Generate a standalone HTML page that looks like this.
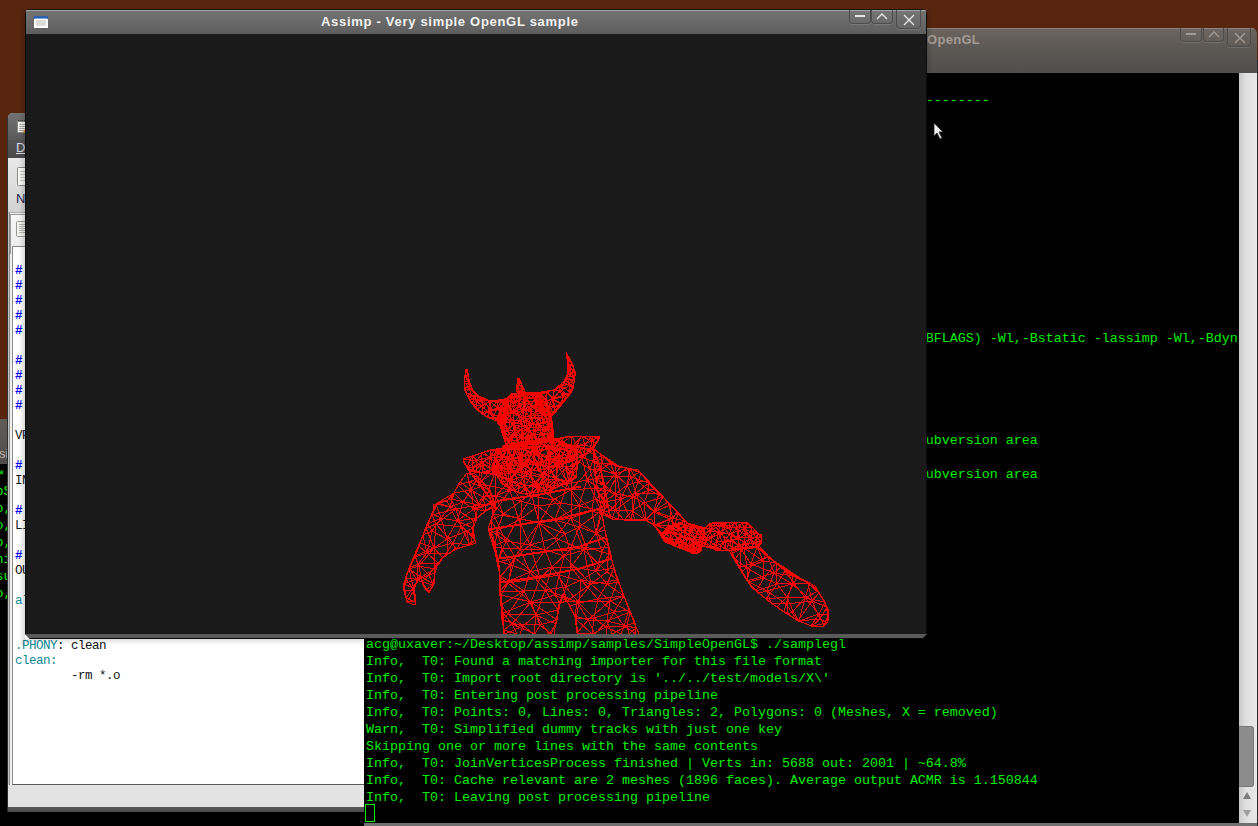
<!DOCTYPE html>
<html><head><meta charset="utf-8">
<style>
*{margin:0;padding:0;box-sizing:border-box}
html,body{width:1258px;height:826px;overflow:hidden;background:#58260f;position:relative;font-family:"Liberation Sans",sans-serif}
.a{position:absolute}
.mono{font-family:"Liberation Mono",monospace;white-space:pre}
/* left terminal */
#lt{left:-400px;top:419px;width:800px;height:407px;background:#000;overflow:hidden}
#lt .tb{left:0;top:0;width:800px;height:45px;background:linear-gradient(#625c58,#4e4d4c)}
/* gedit */
#ge{left:8px;top:113px;width:420px;height:699px;background:#dcdcdc;border-radius:5px 5px 0 0;overflow:hidden}
#gesh{left:7px;top:118px;width:1px;height:694px;background:#2e2e2e}
#ge .tb{left:0;top:0;width:420px;height:27px;background:linear-gradient(#727272,#5a5a5a)}
#ge .mb{left:0;top:27px;width:420px;height:18px;background:linear-gradient(#555,#4a4a4a)}
#ge .tool{left:0;top:45px;width:420px;height:55px;background:linear-gradient(#e8e8e8,#d2d2d2);border-bottom:1px solid #b0b0b0}
#ge .nb{left:0;top:100px;width:420px;height:572px;background:#efefef;border-left:1px solid #c4c4c4}
#ge .nbl{left:1px;top:100px;width:1px;height:572px;background:#8c8c8c}
#ge .tab{left:2px;top:101px;width:418px;height:40px;border:1px solid #9a9a9a;border-bottom:none;background:linear-gradient(#f6f6f6,#ececec)}
#ge .txt{left:4px;top:133px;width:420px;height:539px;background:#fff;border-left:1px solid #8a8a8a;border-top:1px solid #8a8a8a;border-bottom:1px solid #5a5a5a}
#ge .sb{left:0;top:672px;width:420px;height:22px;background:#e3e3e3}
#ge .bb{left:0;top:694px;width:420px;height:5px;background:linear-gradient(#5a5a5a,#4a4a4a)}
.gl{font-size:12.5px;line-height:15px;letter-spacing:-0.5px;color:#111}
.hs{color:#0000ff;font-weight:bold}.tc{color:#0a8a96}
/* right terminal */
#rt{left:364px;top:28px;width:893px;height:798px;background:#000;border-radius:5px 5px 0 0;overflow:hidden}
#rt .tb{left:0;top:0;width:894px;height:45px;background:linear-gradient(#6c645f 0%,#5d5955 40%,#4f4f4f 100%);border-top:1px solid #8a827c}
#rt .sc{left:875px;top:45px;width:18px;height:750px;background:linear-gradient(90deg,#c8c8c8,#e0e0e0 40%,#e8e8e8)}
#rt .bot{left:0;top:795px;width:894px;height:3px;background:#707070}
.tl{font-size:13.33px;line-height:17px;color:#00f000}
/* opengl window */
#gw{left:25px;top:9px;width:902px;height:630px;background:#1a1a1a;border-radius:4px 4px 0 0;overflow:hidden;clip-path:polygon(0.00px 5.00px,0.17px 3.71px,0.67px 2.50px,1.46px 1.46px,2.50px 0.67px,3.71px 0.17px,5.00px 0.00px,calc(100% - 5.00px) 0.00px,calc(100% - 3.71px) 0.17px,calc(100% - 2.50px) 0.67px,calc(100% - 1.46px) 1.46px,calc(100% - 0.67px) 2.50px,calc(100% - 0.17px) 3.71px,calc(100% - 0.00px) 5.00px,100% calc(100% - 5px),calc(100% - 5px) 100%,5px 100%,0 calc(100% - 5px))}
#gwsh{left:19px;top:9px;width:914px;height:636px;background:linear-gradient(90deg,rgba(0,0,0,0),rgba(0,0,0,.14) 6px,rgba(0,0,0,0) 6px,rgba(0,0,0,0) calc(100% - 6px),rgba(0,0,0,.14) calc(100% - 6px),rgba(0,0,0,0));}
#gwsh2{left:25px;top:639px;width:902px;height:6px;background:linear-gradient(rgba(0,0,0,.12),rgba(0,0,0,0))}
#gw .tb{left:0;top:0;width:902px;height:25px;background:linear-gradient(#747474,#5e5e5e);border-top:1px solid #161616;box-shadow:inset 0 1px 0 #a4a4a4}
#gw .bot{left:0;top:625px;width:902px;height:5px;background:#5a5a5a;border-bottom:1px solid #0a0a0a}
.btn{position:absolute;border:1px solid #4c4c4c;border-top:none;border-radius:0 0 4px 4px;background:rgba(255,255,255,.02);box-shadow:0 1px 0 rgba(255,255,255,.13)}
</style></head>
<body>

<!-- left terminal -->
<div id="lt" class="a">
  <div class="tb a"></div>
  <div class="a" style="left:399px;top:27px;font:13px 'Liberation Sans';color:#bdb5ad">si</div>
  <div class="a mono tl" style="left:395.5px;top:47px;">
pS
o,
o,
o,
ni
su
o,</div>
  <div class="a mono tl" style="left:397.5px;top:47.5px">*</div>
</div>

<!-- gedit -->
<div id="gesh" class="a"></div>
<div id="ge" class="a">
  <div class="tb a"></div>
  <svg class="a" style="left:8px;top:6px" width="14" height="15" viewBox="0 0 14 15">
    <rect x="1.5" y="2.5" width="11" height="11" fill="#f4f4f0" stroke="#8a8a8a" stroke-width="1"/>
    <path d="M2 1.5h1M4 1.5h1M6 1.5h1M8 1.5h1M10 1.5h1" stroke="#333"/>
    <path d="M3 5.5h8M3 7.5h8M3 9.5h8M3 11.5h6" stroke="#a8a8a8"/>
    <path d="M8 13 L13 7" stroke="#e08a10" stroke-width="2"/>
  </svg>
  <div class="mb a"></div>
  <div class="a" style="left:8px;top:27px;font:13px 'Liberation Sans';color:#d4dae6;text-decoration:underline">D</div>
  <div class="tool a"></div>
  <svg class="a" style="left:9px;top:54px" width="14" height="19" viewBox="0 0 14 19">
    <rect x="0.5" y="0.5" width="13" height="18" rx="1" fill="#f8f8f6" stroke="#8a8a8a"/>
    <path d="M3 4.5h5M3 7.5h8M3 10.5h8M3 13.5h8" stroke="#c4c4c4"/>
    <rect x="11" y="9" width="3" height="8" fill="#e8741a"/>
  </svg>
  <div class="a" style="left:8px;top:78px;font:13px 'Liberation Sans';color:#23234a">N</div>
  <div class="nb a"></div><div class="nbl a"></div>
  <div class="tab a"></div>
  <svg class="a" style="left:8px;top:108px" width="14" height="16" viewBox="0 0 14 16">
    <rect x="0.5" y="0.5" width="13" height="15" rx="1" fill="#f2f2ef" stroke="#9a9a9a"/>
    <path d="M3 3.5h8M3 5.5h8M3 7.5h8M3 9.5h8M3 11.5h8" stroke="#b4b4b4"/>
  </svg>
  <div class="txt a"></div>
  <div class="a mono gl" style="left:7px;top:151px"><span class="hs">#</span>
<span class="hs">#</span>
<span class="hs">#</span>
<span class="hs">#</span>
<span class="hs">#</span>

<span class="hs">#</span>
<span class="hs">#</span>
<span class="hs">#</span>
<span class="hs">#</span>

VPATH

<span class="hs">#</span>
INCLUDEFLAGS

<span class="hs">#</span>
LIBRARYFLAGS

<span class="hs">#</span>
OUTPUT

<span class="tc">all:</span>


<span class="tc">.PHONY</span>: clean
<span class="tc">clean:</span>
        -rm *.o</div>
  <div class="sb a"></div>
  <div class="bb a"></div>
</div>

<!-- right terminal -->
<div id="rt" class="a">
  <div class="tb a"></div>
  <div class="a" style="left:563px;top:4px;font:bold 13px 'Liberation Sans';letter-spacing:0.3px;color:#a39b94">OpenGL</div>
  <div class="btn" style="left:816px;top:0;width:22px;height:14px"><div class="a" style="left:5px;top:5px;width:10px;height:2px;background:#a39b94"></div></div>
  <div class="btn" style="left:839px;top:0;width:21px;height:14px"><svg class="a" style="left:4px;top:2px" width="12" height="8"><path d="M1 7 L6 2 L11 7" stroke="#a39b94" stroke-width="1.3" fill="none"/></svg></div>
  <div class="btn" style="left:863px;top:0;width:24px;height:19px"><svg class="a" style="left:6px;top:4px" width="12" height="12"><path d="M1 1 L11 11 M11 1 L1 11" stroke="#a39b94" stroke-width="1.3" fill="none"/></svg></div>
  <div class="a mono tl" style="left:2px;top:47px">
------------------------------------------------------------------------------













                                                                  $(LIBFLAGS) -Wl,-Bstatic -lassimp -Wl,-Bdyn





                                                                      ubversion area

                                                                      ubversion area









acg@uxaver:~/Desktop/assimp/samples/SimpleOpenGL$ ./samplegl
Info,  T0: Found a matching importer for this file format
Info,  T0: Import root directory is &#x27;../../test/models/X\&#x27;
Info,  T0: Entering post processing pipeline
Info,  T0: Points: 0, Lines: 0, Triangles: 2, Polygons: 0 (Meshes, X = removed)
Warn,  T0: Simplified dummy tracks with just one key
Skipping one or more lines with the same contents
Info,  T0: JoinVerticesProcess finished | Verts in: 5688 out: 2001 | ~64.8%
Info,  T0: Cache relevant are 2 meshes (1896 faces). Average output ACMR is 1.150844
Info,  T0: Leaving post processing pipeline
</div>
  <div class="a" style="left:1px;top:776px;width:10px;height:18px;border:1px solid #00f000"></div>
  <div class="sc a"></div>
  <div class="a" style="left:875px;top:698px;width:15px;height:61px;background:#8c8c8c;border:1px solid #787878;border-left:none;border-radius:0 3px 3px 0"></div>
  <svg class="a" style="left:878px;top:763px" width="10" height="28"><path d="M5 1 L9 8 L1 8Z" fill="#7c7c7c"/><path d="M1 19 L9 19 L5 26Z" fill="#a0a0a0"/></svg>
  <div class="bot a"></div>
</div>

<div class="a" style="left:1257px;top:60px;width:1px;height:766px;background:#2a2a2a"></div>
<!-- opengl window -->
<div id="gwsh" class="a"></div><div id="gwsh2" class="a"></div>
<div id="gw" class="a">
  <div class="tb a"></div>
  <svg class="a" style="left:9px;top:7px" width="14" height="12" viewBox="0 0 14 12">
    <rect x="0" y="0" width="14" height="12" fill="#fff"/>
    <rect x="0" y="0" width="14" height="3" fill="#2d62b0"/>
    <rect x="1" y="2" width="12" height="1" fill="#7aa6e0"/>
    <rect x="2" y="4" width="10" height="6" fill="#dcdcd8"/>
  </svg>
  <div class="a" style="left:296px;top:5px;font:bold 13px 'Liberation Sans';letter-spacing:0.7px;color:#f2f2f2;white-space:nowrap">Assimp - Very simple OpenGL sample</div>
  <div class="btn" style="left:824px;top:1px;width:22px;height:14px"><div class="a" style="left:5px;top:5px;width:10px;height:2px;background:#e6e6e6"></div></div>
  <div class="btn" style="left:846px;top:1px;width:22px;height:14px"><svg class="a" style="left:4px;top:2px" width="12" height="8"><path d="M1 7 L6 2 L11 7" stroke="#e6e6e6" stroke-width="1.3" fill="none"/></svg></div>
  <div class="btn" style="left:871px;top:1px;width:25px;height:19px"><svg class="a" style="left:6px;top:4px" width="12" height="12"><path d="M1 1 L11 11 M11 1 L1 11" stroke="#e6e6e6" stroke-width="1.3" fill="none"/></svg></div>
  <svg class="a" style="left:0;top:0" width="901" height="629"><path d="M443 366 L440 366 M440 366 L442 360 M442 360 L443 366 M456 404 L462 408 M462 408 L451 400 M451 400 L456 404 M462 408 L456 404 M456 404 L466 401 M466 401 L462 408 M477 392 L483 389 M483 389 L483 392 M483 392 L477 392 M477 392 L472 392 M472 392 L483 389 M483 389 L477 392 M440 366 L444 372 M444 372 L439 373 M439 373 L440 366 M444 372 L440 366 M440 366 L443 366 M443 366 L444 372 M480 411 L478 407 M478 407 L481 405 M481 405 L480 411 M468 409 L462 408 M462 408 L466 401 M466 401 L468 409 M462 408 L468 409 M468 409 L479 415 M479 415 L462 408 M477 392 L472 399 M472 399 L472 392 M472 392 L477 392 M478 407 L472 399 M472 399 L481 405 M481 405 L478 407 M472 399 L468 409 M468 409 L466 401 M466 401 L472 399 M468 409 L472 399 M472 399 L478 407 M478 407 L468 409 M468 409 L474 411 M474 411 L479 415 M479 415 L468 409 M474 411 L468 409 M468 409 L478 407 M478 407 L474 411 M474 411 L480 411 M480 411 L479 415 M479 415 L474 411 M480 411 L474 411 M474 411 L478 407 M478 407 L480 411 M472 399 L480 396 M480 396 L481 405 M481 405 L472 399 M480 396 L472 399 M472 399 L477 392 M477 392 L480 396 M480 396 L477 392 M477 392 L483 392 M483 392 L480 396 M444 372 L444 378 M444 378 L439 373 M439 373 L444 372 M483 398 L480 396 M480 396 L483 392 M483 392 L483 398 M480 396 L483 398 M483 398 L481 405 M481 405 L480 396 M483 398 L480 411 M480 411 L481 405 M481 405 L483 398 M444 390 L448 395 M448 395 L451 400 M451 400 L444 390 M441 384 L444 378 M444 378 L446 386 M446 386 L441 384 M444 390 L441 384 M441 384 L446 386 M446 386 L444 390 M444 378 L439 379 M439 379 L439 373 M439 373 L444 378 M441 384 L439 379 M439 379 L444 378 M444 378 L441 384 M444 378 L449 383 M449 383 L446 386 M446 386 L444 378 M449 383 L444 378 M444 378 L444 372 M444 372 L449 383 M461 395 L456 404 M456 404 L451 400 M451 400 L461 395 M456 404 L461 395 M461 395 L466 401 M466 401 L456 404 M449 383 L453 388 M453 388 L446 386 M446 386 L449 383 M453 388 L449 383 M449 383 L459 391 M459 391 L453 388 M465 392 L461 395 M461 395 L459 391 M459 391 L465 392 M461 395 L465 392 M465 392 L466 401 M466 401 L461 395 M465 392 L472 399 M472 399 L466 401 M466 401 L465 392 M472 399 L465 392 M465 392 L472 392 M472 392 L472 399 M452 391 L453 388 M453 388 L459 391 M459 391 L452 391 M448 395 L452 391 M452 391 L451 400 M451 400 L448 395 M452 391 L448 395 M448 395 L444 390 M444 390 L452 391 M452 391 L461 395 M461 395 L451 400 M451 400 L452 391 M461 395 L452 391 M452 391 L459 391 M459 391 L461 395 M452 391 L444 390 M444 390 L446 386 M446 386 L452 391 M453 388 L452 391 M452 391 L446 386 M446 386 L453 388 M443 367 L440 367 M440 367 L442 360 M442 360 L443 367 M453 400 L447 395 M447 395 L457 397 M457 397 L453 400 M475 408 L481 412 M481 412 L477 414 M477 414 L475 408 M440 367 L444 374 M444 374 L439 375 M439 375 L440 367 M444 374 L440 367 M440 367 L443 367 M443 367 L444 374 M483 397 L479 391 M479 391 L484 390 M484 390 L483 397 M479 391 L483 397 M483 397 L476 399 M476 399 L479 391 M457 390 L465 392 M465 392 L457 397 M457 397 L457 390 M458 405 L453 400 M453 400 L457 397 M457 397 L458 405 M475 408 L481 404 M481 404 L481 412 M481 412 L475 408 M481 404 L475 408 M475 408 L476 399 M476 399 L481 404 M481 404 L483 397 M483 397 L481 412 M481 412 L481 404 M483 397 L481 404 M481 404 L476 399 M476 399 L483 397 M464 409 L471 410 M471 410 L477 414 M477 414 L464 409 M471 410 L475 408 M475 408 L477 414 M477 414 L471 410 M452 386 L465 392 M465 392 L457 390 M457 390 L452 386 M463 403 L471 410 M471 410 L464 409 M464 409 L463 403 M458 405 L463 403 M463 403 L464 409 M464 409 L458 405 M475 408 L463 403 M463 403 L476 399 M476 399 L475 408 M471 410 L463 403 M463 403 L475 408 M475 408 L471 410 M465 392 L463 403 M463 403 L457 397 M457 397 L465 392 M463 403 L458 405 M458 405 L457 397 M457 397 L463 403 M473 391 L479 391 M479 391 L476 399 M476 399 L473 391 M479 391 L473 391 M473 391 L484 390 M484 390 L479 391 M449 390 L452 386 M452 386 L457 390 M457 390 L449 390 M447 395 L449 390 M449 390 L457 397 M457 397 L447 395 M449 390 L457 390 M457 390 L457 397 M457 397 L449 390 M463 403 L469 396 M469 396 L476 399 M476 399 L463 403 M469 396 L463 403 M463 403 L465 392 M465 392 L469 396 M469 396 L473 391 M473 391 L476 399 M476 399 L469 396 M473 391 L469 396 M469 396 L465 392 M465 392 L473 391 M444 374 L440 381 M440 381 L439 375 M439 375 L444 374 M443 388 L449 390 M449 390 L447 395 M447 395 L443 388 M449 390 L443 388 M443 388 L452 386 M452 386 L449 390 M443 388 L447 380 M447 380 L452 386 M452 386 L443 388 M447 380 L443 388 M443 388 L440 381 M440 381 L447 380 M447 380 L440 381 M440 381 L444 374 M444 374 L447 380 M441 360 L440 367 M440 367 L439 377 M439 377 L441 384 M441 384 L446 394 M446 394 L453 402 M453 402 L463 408 M463 408 L472 410 M472 410 L480 416 M480 416 L484 388 M484 388 L480 392 M480 392 L463 392 M463 392 L455 390 M455 390 L445 379 M445 379 L444 370 M444 370 L443 364 M443 364 L441 360 M497 376 L494 369 M494 369 L499 380 M499 380 L497 376 M493 376 L492 379 M492 379 L491 383 M491 383 L493 376 M492 379 L493 379 M493 379 L491 383 M491 383 L492 379 M498 381 L494 382 M494 382 L499 380 M499 380 L498 381 M494 382 L493 379 M493 379 L499 380 M499 380 L494 382 M493 379 L494 382 M494 382 L491 383 M491 383 L493 379 M497 376 L495 373 M495 373 L494 369 M494 369 L497 376 M494 376 L492 379 M492 379 L493 376 M493 376 L494 376 M492 379 L494 376 M494 376 L493 379 M493 379 L492 379 M495 373 L494 376 M494 376 L493 376 M493 376 L495 373 M494 376 L495 373 M495 373 L497 376 M497 376 L494 376 M493 379 L494 376 M494 376 L499 380 M499 380 L493 379 M494 376 L497 376 M497 376 L499 380 M499 380 L494 376 M494 371 L493 376 M493 376 L494 369 M494 369 L494 371 M495 373 L494 371 M494 371 L494 369 M494 369 L495 373 M494 371 L495 373 M495 373 L493 376 M493 376 L494 371 M491 382 L493 369 M493 369 L500 382 M500 382 L491 382 M522 383 L510 384 M510 384 L528 381 M528 381 L522 383 M513 392 L510 397 M510 397 L510 390 M510 390 L513 392 M549 374 L542 368 M542 368 L549 367 M549 367 L549 374 M521 401 L513 392 M513 392 L521 392 M521 392 L521 401 M518 404 L521 401 M521 401 L525 406 M525 406 L518 404 M521 401 L529 403 M529 403 L525 406 M525 406 L521 401 M513 392 L521 401 M521 401 L510 397 M510 397 L513 392 M510 397 L521 401 M521 401 L512 402 M512 402 L510 397 M521 401 L518 404 M518 404 L512 402 M512 402 L521 401 M529 403 L540 390 M540 390 L544 386 M544 386 L529 403 M544 356 L543 349 M543 349 L547 355 M547 355 L544 356 M544 356 L544 361 M544 361 L542 368 M542 368 L544 356 M544 361 L544 356 M544 356 L547 355 M547 355 L544 361 M516 385 L522 383 M522 383 L521 392 M521 392 L516 385 M513 392 L516 385 M516 385 L521 392 M521 392 L513 392 M522 383 L516 385 M516 385 L510 384 M510 384 L522 383 M510 384 L516 385 M516 385 L510 390 M510 390 L510 384 M516 385 L513 392 M513 392 L510 390 M510 390 L516 385 M539 374 L534 378 M534 378 L542 368 M542 368 L539 374 M545 376 L548 380 M548 380 L544 386 M544 386 L545 376 M545 376 L549 374 M549 374 L548 380 M548 380 L545 376 M549 374 L545 376 M545 376 L542 368 M542 368 L549 374 M545 376 L539 374 M539 374 L542 368 M542 368 L545 376 M534 378 L535 382 M535 382 L528 381 M528 381 L534 378 M535 382 L545 376 M545 376 L544 386 M544 386 L535 382 M535 382 L534 378 M534 378 L539 374 M539 374 L535 382 M545 376 L535 382 M535 382 L539 374 M539 374 L545 376 M530 398 L521 401 M521 401 L521 392 M521 392 L530 398 M521 401 L530 398 M530 398 L529 403 M529 403 L521 401 M547 355 L544 349 M544 349 L541 343 M541 343 L547 355 M544 349 L543 349 M543 349 L541 343 M541 343 L544 349 M543 349 L544 349 M544 349 L547 355 M547 355 L543 349 M549 360 L544 361 M544 361 L547 355 M547 355 L549 360 M536 394 L540 390 M540 390 L529 403 M529 403 L536 394 M530 398 L536 394 M536 394 L529 403 M529 403 L530 398 M528 390 L530 398 M530 398 L521 392 M521 392 L528 390 M528 390 L522 383 M522 383 L528 381 M528 381 L528 390 M522 383 L528 390 M528 390 L521 392 M521 392 L522 383 M528 390 L536 394 M536 394 L530 398 M530 398 L528 390 M535 382 L528 390 M528 390 L528 381 M528 381 L535 382 M547 365 L549 360 M549 360 L549 367 M549 367 L547 365 M549 360 L547 365 M547 365 L544 361 M544 361 L549 360 M542 368 L547 365 M547 365 L549 367 M549 367 L542 368 M544 361 L547 365 M547 365 L542 368 M542 368 L544 361 M536 394 L538 388 M538 388 L540 390 M540 390 L536 394 M528 390 L538 388 M538 388 L536 394 M536 394 L528 390 M538 388 L528 390 M528 390 L535 382 M535 382 L538 388 M540 390 L538 388 M538 388 L544 386 M544 386 L540 390 M538 388 L535 382 M535 382 L544 386 M544 386 L538 388 M510 392 L510 399 M510 399 L510 384 M510 384 L510 392 M541 371 L543 365 M543 365 L550 370 M550 370 L541 371 M544 375 L548 377 M548 377 L546 384 M546 384 L544 375 M544 375 L541 371 M541 371 L550 370 M550 370 L544 375 M548 377 L544 375 M544 375 L550 370 M550 370 L548 377 M541 390 L546 384 M546 384 L529 405 M529 405 L541 390 M536 395 L541 390 M541 390 L529 405 M529 405 L536 395 M524 397 L523 405 M523 405 L515 403 M515 403 L524 397 M523 405 L524 397 M524 397 L529 405 M529 405 L523 405 M548 356 L544 349 M544 349 L541 343 M541 343 L548 356 M548 356 L549 363 M549 363 L544 357 M544 357 L548 356 M537 377 L544 375 M544 375 L546 384 M546 384 L537 377 M544 375 L537 377 M537 377 L541 371 M541 371 L544 375 M524 397 L529 398 M529 398 L529 405 M529 405 L524 397 M542 350 L548 356 M548 356 L544 357 M544 357 L542 350 M542 350 L544 349 M544 349 L548 356 M548 356 L542 350 M544 349 L542 350 M542 350 L541 343 M541 343 L544 349 M543 365 L542 350 M542 350 L544 357 M544 357 L543 365 M543 365 L546 364 M546 364 L550 370 M550 370 L543 365 M546 364 L549 363 M549 363 L550 370 M550 370 L546 364 M546 364 L543 365 M543 365 L544 357 M544 357 L546 364 M549 363 L546 364 M546 364 L544 357 M544 357 L549 363 M541 390 L539 386 M539 386 L546 384 M546 384 L541 390 M539 386 L537 377 M537 377 L546 384 M546 384 L539 386 M539 386 L541 390 M541 390 L536 395 M536 395 L539 386 M516 385 L510 392 M510 392 L510 384 M510 384 L516 385 M523 383 L516 385 M516 385 L510 384 M510 384 L523 383 M527 390 L539 386 M539 386 L536 395 M536 395 L527 390 M529 398 L527 390 M527 390 L536 395 M536 395 L529 398 M527 390 L529 398 M529 398 L524 397 M524 397 L527 390 M539 386 L530 380 M530 380 L537 377 M537 377 L539 386 M527 390 L530 380 M530 380 L539 386 M539 386 L527 390 M530 380 L527 390 M527 390 L523 383 M523 383 L530 380 M537 377 L530 380 M530 380 L541 371 M541 371 L537 377 M517 393 L516 385 M516 385 L523 383 M523 383 L517 393 M527 390 L517 393 M517 393 L523 383 M523 383 L527 390 M517 393 L527 390 M527 390 L524 397 M524 397 L517 393 M516 385 L517 393 M517 393 L510 392 M510 392 L516 385 M510 392 L517 393 M517 393 L510 399 M510 399 L510 392 M517 393 L515 403 M515 403 L510 399 M510 399 L517 393 M517 393 L524 397 M524 397 L515 403 M515 403 L517 393 M541 343 L546 353 M546 353 L550 362 M550 362 L550 367 M550 367 L548 380 M548 380 L542 388 M542 388 L536 395 M536 395 L529 399 M529 399 L529 405 M529 405 L526 407 M526 407 L510 401 M510 401 L510 384 M510 384 L514 385 M514 385 L518 384 M518 384 L531 380 M531 380 L538 377 M538 377 L540 371 M540 371 L544 361 M544 361 L543 350 M543 350 L541 343 M527 418 L527 424 M527 424 L519 420 M519 420 L527 418 M512 434 L498 436 M498 436 L507 434 M507 434 L512 434 M481 435 L486 431 M486 431 L483 438 M483 438 L481 435 M478 409 L473 415 M473 415 L472 409 M472 409 L478 409 M473 415 L478 409 M478 409 L479 414 M479 414 L473 415 M485 411 L496 412 M496 412 L488 416 M488 416 L485 411 M485 411 L478 409 M478 409 L485 404 M485 404 L485 411 M478 409 L485 411 M485 411 L479 414 M479 414 L478 409 M478 409 L480 399 M480 399 L485 404 M485 404 L478 409 M480 399 L478 409 M478 409 L476 400 M476 400 L480 399 M493 398 L492 404 M492 404 L485 404 M485 404 L493 398 M492 404 L485 411 M485 411 L485 404 M485 404 L492 404 M485 411 L492 404 M492 404 L496 412 M496 412 L485 411 M507 386 L507 383 M507 383 L512 385 M512 385 L507 386 M510 390 L507 386 M507 386 L512 385 M512 385 L510 390 M507 383 L507 386 M507 386 L502 383 M502 383 L507 383 M517 387 L510 390 M510 390 L512 385 M512 385 L517 387 M510 406 L512 415 M512 415 L505 415 M505 415 L510 406 M512 415 L510 422 M510 422 L505 415 M505 415 L512 415 M510 422 L512 415 M512 415 L519 420 M519 420 L510 422 M512 431 L512 434 M512 434 L507 434 M507 434 L512 431 M480 429 L486 431 M486 431 L481 435 M481 435 L480 429 M477 416 L473 415 M473 415 L479 414 M479 414 L477 416 M479 420 L477 416 M477 416 L479 414 M479 414 L479 420 M477 416 L479 420 M479 420 L473 415 M473 415 L477 416 M476 400 L474 405 M474 405 L472 409 M472 409 L476 400 M474 405 L478 409 M478 409 L472 409 M472 409 L474 405 M478 409 L474 405 M474 405 L476 400 M476 400 L478 409 M480 391 L476 400 M476 400 L472 409 M472 409 L480 391 M483 392 L480 391 M480 391 L484 388 M484 388 L483 392 M489 394 L493 398 M493 398 L485 404 M485 404 L489 394 M480 399 L489 394 M489 394 L485 404 M485 404 L480 399 M483 392 L489 394 M489 394 L480 399 M480 399 L483 392 M489 394 L494 391 M494 391 L493 398 M493 398 L489 394 M489 394 L483 392 M483 392 L484 388 M484 388 L489 394 M494 391 L500 394 M500 394 L493 398 M493 398 L494 391 M502 401 L492 404 M492 404 L493 398 M493 398 L502 401 M502 401 L500 394 M500 394 L506 396 M506 396 L502 401 M500 394 L502 401 M502 401 L493 398 M493 398 L500 394 M512 415 L518 414 M518 414 L519 420 M519 420 L512 415 M510 398 L516 398 M516 398 L510 406 M510 406 L510 398 M510 398 L502 401 M502 401 L506 396 M506 396 L510 398 M502 401 L510 398 M510 398 L510 406 M510 406 L502 401 M510 390 L510 398 M510 398 L506 396 M506 396 L510 390 M517 387 L516 391 M516 391 L510 390 M510 390 L517 387 M516 391 L510 398 M510 398 L510 390 M510 390 L516 391 M510 398 L516 391 M516 391 L516 398 M516 398 L510 398 M516 398 L517 407 M517 407 L510 406 M510 406 L516 398 M517 407 L512 415 M512 415 L510 406 M510 406 L517 407 M517 407 L518 414 M518 414 L512 415 M512 415 L517 407 M490 425 L484 419 M484 419 L488 416 M488 416 L490 425 M479 420 L484 419 M484 419 L479 425 M479 425 L479 420 M484 419 L479 420 M479 420 L479 414 M479 414 L484 419 M484 419 L485 411 M485 411 L488 416 M488 416 L484 419 M485 411 L484 419 M484 419 L479 414 M479 414 L485 411 M483 426 L490 425 M490 425 L486 431 M486 431 L483 426 M483 426 L480 429 M480 429 L479 425 M479 425 L483 426 M480 429 L483 426 M483 426 L486 431 M486 431 L480 429 M484 419 L483 426 M483 426 L479 425 M479 425 L484 419 M483 426 L484 419 M484 419 L490 425 M490 425 L483 426 M498 436 L503 435 M503 435 L507 434 M507 434 L498 436 M503 435 L501 430 M501 430 L507 434 M507 434 L503 435 M501 430 L503 435 M503 435 L498 436 M498 436 L501 430 M510 422 L504 421 M504 421 L505 415 M505 415 L510 422 M512 431 L506 427 M506 427 L510 422 M510 422 L512 431 M506 427 L504 421 M504 421 L510 422 M510 422 L506 427 M504 421 L506 427 M506 427 L501 430 M501 430 L504 421 M501 430 L506 427 M506 427 L507 434 M507 434 L501 430 M506 427 L512 431 M512 431 L507 434 M507 434 L506 427 M516 425 L510 422 M510 422 L519 420 M519 420 L516 425 M516 425 L512 431 M512 431 L510 422 M510 422 L516 425 M486 431 L488 437 M488 437 L483 438 M483 438 L486 431 M488 437 L493 436 M493 436 L498 436 M498 436 L488 437 M496 428 L504 421 M504 421 L501 430 M501 430 L496 428 M496 428 L501 430 M501 430 L498 436 M498 436 L496 428 M478 395 L480 399 M480 399 L476 400 M476 400 L478 395 M480 391 L478 395 M478 395 L476 400 M476 400 L480 391 M478 395 L483 392 M483 392 L480 399 M480 399 L478 395 M483 392 L478 395 M478 395 L480 391 M480 391 L483 392 M489 394 L490 387 M490 387 L494 391 M494 391 L489 394 M492 384 L490 387 M490 387 L488 385 M488 385 L492 384 M488 385 L490 387 M490 387 L484 388 M484 388 L488 385 M490 387 L489 394 M489 394 L484 388 M484 388 L490 387 M497 386 L490 387 M490 387 L492 384 M492 384 L497 386 M490 387 L497 386 M497 386 L494 391 M494 391 L490 387 M497 384 L492 384 M492 384 L502 383 M502 383 L497 384 M497 386 L497 384 M497 384 L502 383 M502 383 L497 386 M497 384 L497 386 M497 386 L492 384 M492 384 L497 384 M502 389 L510 390 M510 390 L506 396 M506 396 L502 389 M500 394 L502 389 M502 389 L506 396 M506 396 L500 394 M502 389 L507 386 M507 386 L510 390 M510 390 L502 389 M507 386 L502 389 M502 389 L502 383 M502 383 L507 386 M502 389 L497 386 M497 386 L502 383 M502 383 L502 389 M497 386 L502 389 M502 389 L494 391 M494 391 L497 386 M502 389 L500 394 M500 394 L494 391 M494 391 L502 389 M492 404 L500 408 M500 408 L496 412 M496 412 L492 404 M502 401 L500 408 M500 408 L492 404 M492 404 L502 401 M496 412 L500 408 M500 408 L505 415 M505 415 L496 412 M500 408 L510 406 M510 406 L505 415 M505 415 L500 408 M500 408 L502 401 M502 401 L510 406 M510 406 L500 408 M516 398 L522 395 M522 395 L523 400 M523 400 L516 398 M516 391 L522 395 M522 395 L516 398 M516 398 L516 391 M523 400 L522 395 M522 395 L526 404 M526 404 L523 400 M522 406 L516 398 M516 398 L523 400 M523 400 L522 406 M522 406 L517 407 M517 407 L516 398 M516 398 L522 406 M522 406 L523 400 M523 400 L526 404 M526 404 L522 406 M526 409 L522 406 M522 406 L526 404 M526 404 L526 409 M517 407 L522 406 M522 406 L518 414 M518 414 L517 407 M522 406 L526 409 M526 409 L518 414 M518 414 L522 406 M527 424 L526 427 M526 427 L519 420 M519 420 L527 424 M527 432 L526 427 M526 427 L529 428 M529 428 L527 432 M526 427 L527 424 M527 424 L529 428 M529 428 L526 427 M512 431 L517 433 M517 433 L512 434 M512 434 L512 431 M493 436 L492 432 M492 432 L498 436 M498 436 L493 436 M492 432 L496 428 M496 428 L498 436 M498 436 L492 432 M492 432 L488 437 M488 437 L486 431 M486 431 L492 432 M488 437 L492 432 M492 432 L493 436 M493 436 L488 437 M490 425 L492 432 M492 432 L486 431 M486 431 L490 425 M496 428 L492 432 M492 432 L490 425 M490 425 L496 428 M496 428 L496 421 M496 421 L504 421 M504 421 L496 428 M496 421 L496 412 M496 412 L505 415 M505 415 L496 421 M504 421 L496 421 M496 421 L505 415 M505 415 L504 421 M496 421 L496 428 M496 428 L490 425 M490 425 L496 421 M496 412 L496 421 M496 421 L488 416 M488 416 L496 412 M496 421 L490 425 M490 425 L488 416 M488 416 L496 421 M526 409 L524 416 M524 416 L518 414 M518 414 L526 409 M524 416 L527 418 M527 418 L519 420 M519 420 L524 416 M518 414 L524 416 M524 416 L519 420 M519 420 L518 414 M520 390 L516 391 M516 391 L517 387 M517 387 L520 390 M520 390 L522 395 M522 395 L516 391 M516 391 L520 390 M522 395 L520 390 M520 390 L526 404 M526 404 L522 395 M523 433 L526 427 M526 427 L527 432 M527 432 L523 433 M517 433 L523 433 M523 433 L512 434 M512 434 L517 433 M516 425 L520 430 M520 430 L512 431 M512 431 L516 425 M520 430 L517 433 M517 433 L512 431 M512 431 L520 430 M520 430 L523 433 M523 433 L517 433 M517 433 L520 430 M523 433 L520 430 M520 430 L526 427 M526 427 L523 433 M520 430 L516 425 M516 425 L519 420 M519 420 L520 430 M526 427 L520 430 M520 430 L519 420 M519 420 L526 427 M524 416 L526 414 M526 414 L527 418 M527 418 L524 416 M526 414 L524 416 M524 416 L526 409 M526 409 L526 414 M526 414 L526 409 M526 409 L526 404 M526 404 L526 414 M526 414 L526 404 M526 404 L529 428 M529 428 L526 414 M527 424 L526 414 M526 414 L529 428 M529 428 L527 424 M526 414 L527 424 M527 424 L527 418 M527 418 L526 414 M481 435 L475 416 M475 416 L480 430 M480 430 L481 435 M474 406 L476 408 M476 408 L472 412 M472 412 L474 406 M511 384 L505 384 M505 384 L500 383 M500 383 L511 384 M510 386 L505 384 M505 384 L511 384 M511 384 L510 386 M505 384 L510 386 M510 386 L500 392 M500 392 L505 384 M500 392 L512 393 M512 393 L505 401 M505 401 L500 392 M512 393 L515 398 M515 398 L505 401 M505 401 L512 393 M510 386 L512 393 M512 393 L500 392 M500 392 L510 386 M475 416 L480 424 M480 424 L480 430 M480 430 L475 416 M487 429 L480 424 M480 424 L483 421 M483 421 L487 429 M480 424 L487 429 M487 429 L480 430 M480 430 L480 424 M474 406 L476 401 M476 401 L476 408 M476 408 L474 406 M478 396 L476 401 M476 401 L474 406 M474 406 L478 396 M476 408 L479 413 M479 413 L472 412 M472 412 L476 408 M479 413 L475 416 M475 416 L472 412 M472 412 L479 413 M479 413 L489 413 M489 413 L483 421 M483 421 L479 413 M506 435 L517 433 M517 433 L527 432 M527 432 L506 435 M505 384 L500 386 M500 386 L500 383 M500 383 L505 384 M500 386 L505 384 M505 384 L500 392 M500 392 L500 386 M500 386 L494 384 M494 384 L500 383 M500 383 L500 386 M485 398 L478 396 M478 396 L480 391 M480 391 L485 398 M485 398 L476 401 M476 401 L478 396 M478 396 L485 398 M494 384 L494 388 M494 388 L488 384 M488 384 L494 384 M500 386 L494 388 M494 388 L494 384 M494 384 L500 386 M494 396 L494 388 M494 388 L500 392 M500 392 L494 396 M494 388 L500 386 M500 386 L500 392 M500 392 L494 388 M496 415 L494 408 M494 408 L501 412 M501 412 L496 415 M494 408 L496 415 M496 415 L489 413 M489 413 L494 408 M512 393 L517 390 M517 390 L515 398 M515 398 L512 393 M522 413 L520 405 M520 405 L525 405 M525 405 L522 413 M517 390 L522 396 M522 396 L515 398 M515 398 L517 390 M522 396 L517 390 M517 390 L520 390 M520 390 L522 396 M515 398 L511 404 M511 404 L505 401 M505 401 L515 398 M520 405 L511 404 M511 404 L515 398 M515 398 L520 405 M515 425 L509 426 M509 426 L515 418 M515 418 L515 425 M509 426 L508 415 M508 415 L515 418 M515 418 L509 426 M491 421 L487 429 M487 429 L483 421 M483 421 L491 421 M489 413 L491 421 M491 421 L483 421 M483 421 L489 413 M496 415 L491 421 M491 421 L489 413 M489 413 L496 415 M480 424 L479 419 M479 419 L483 421 M483 421 L480 424 M479 419 L480 424 M480 424 L475 416 M475 416 L479 419 M479 419 L479 413 M479 413 L483 421 M483 421 L479 419 M479 413 L479 419 M479 419 L475 416 M475 416 L479 413 M523 419 L515 425 M515 425 L515 418 M515 418 L523 419 M527 422 L523 419 M523 419 L526 417 M526 417 L527 422 M522 413 L523 419 M523 419 L515 418 M515 418 L522 413 M523 419 L522 413 M522 413 L526 417 M526 417 L523 419 M485 398 L487 389 M487 389 L494 396 M494 396 L485 398 M487 389 L494 388 M494 388 L494 396 M494 396 L487 389 M484 387 L487 389 M487 389 L480 391 M480 391 L484 387 M487 389 L485 398 M485 398 L480 391 M480 391 L487 389 M487 389 L484 387 M484 387 L488 384 M488 384 L487 389 M494 388 L487 389 M487 389 L488 384 M488 384 L494 388 M488 403 L494 408 M494 408 L489 413 M489 413 L488 403 M488 403 L485 398 M485 398 L494 396 M494 396 L488 403 M494 408 L497 402 M497 402 L501 412 M501 412 L494 408 M497 402 L500 392 M500 392 L505 401 M505 401 L497 402 M497 402 L494 396 M494 396 L500 392 M500 392 L497 402 M497 402 L488 403 M488 403 L494 396 M494 396 L497 402 M488 403 L497 402 M497 402 L494 408 M494 408 L488 403 M517 390 L516 387 M516 387 L520 390 M520 390 L517 390 M516 387 L510 386 M510 386 L511 384 M511 384 L516 387 M516 387 L512 393 M512 393 L510 386 M510 386 L516 387 M516 387 L517 390 M517 390 L512 393 M512 393 L516 387 M526 411 L522 413 M522 413 L525 405 M525 405 L526 411 M522 413 L526 411 M526 411 L526 417 M526 417 L522 413 M526 411 L527 422 M527 422 L526 417 M526 417 L526 411 M527 422 L526 411 M526 411 L528 428 M528 428 L527 422 M523 400 L520 405 M520 405 L515 398 M515 398 L523 400 M522 396 L523 400 M523 400 L515 398 M515 398 L522 396 M520 405 L523 400 M523 400 L525 405 M525 405 L520 405 M523 400 L522 396 M522 396 L525 405 M525 405 L523 400 M503 420 L496 415 M496 415 L501 412 M501 412 L503 420 M508 415 L503 420 M503 420 L501 412 M501 412 L508 415 M509 426 L503 420 M503 420 L508 415 M508 415 L509 426 M511 404 L506 408 M506 408 L505 401 M505 401 L511 404 M497 402 L506 408 M506 408 L501 412 M501 412 L497 402 M506 408 L497 402 M497 402 L505 401 M505 401 L506 408 M506 408 L508 415 M508 415 L501 412 M501 412 L506 408 M515 409 L511 404 M511 404 L520 405 M520 405 L515 409 M515 409 L522 413 M522 413 L515 418 M515 418 L515 409 M522 413 L515 409 M515 409 L520 405 M520 405 L522 413 M508 415 L515 409 M515 409 L515 418 M515 418 L508 415 M506 408 L515 409 M515 409 L508 415 M508 415 L506 408 M515 409 L506 408 M506 408 L511 404 M511 404 L515 409 M490 437 L495 436 M495 436 L484 437 M484 437 L490 437 M490 437 L490 434 M490 434 L495 436 M495 436 L490 437 M490 434 L484 434 M484 434 L487 429 M487 429 L490 434 M481 435 L484 434 M484 434 L484 437 M484 437 L481 435 M484 434 L490 437 M490 437 L484 437 M484 437 L484 434 M490 437 L484 434 M484 434 L490 434 M490 434 L490 437 M484 434 L481 435 M481 435 L480 430 M480 430 L484 434 M487 429 L484 434 M484 434 L480 430 M480 430 L487 429 M513 430 L509 426 M509 426 L515 425 M515 425 L513 430 M520 429 L513 430 M513 430 L515 425 M515 425 L520 429 M513 430 L520 429 M520 429 L517 433 M517 433 L513 430 M497 428 L490 434 M490 434 L487 429 M487 429 L497 428 M491 421 L497 428 M497 428 L487 429 M487 429 L491 421 M490 434 L497 428 M497 428 L495 436 M495 436 L490 434 M517 433 L522 432 M522 432 L527 432 M527 432 L517 433 M520 429 L522 432 M522 432 L517 433 M517 433 L520 429 M525 425 L523 419 M523 419 L527 422 M527 422 L525 425 M525 425 L527 422 M527 422 L528 428 M528 428 L525 425 M523 419 L525 425 M525 425 L515 425 M515 425 L523 419 M525 425 L520 429 M520 429 L515 425 M515 425 L525 425 M525 425 L522 432 M522 432 L520 429 M520 429 L525 425 M527 432 L525 425 M525 425 L528 428 M528 428 L527 432 M522 432 L525 425 M525 425 L527 432 M527 432 L522 432 M479 413 L483 405 M483 405 L489 413 M489 413 L479 413 M483 405 L488 403 M488 403 L489 413 M489 413 L483 405 M483 405 L479 413 M479 413 L476 408 M476 408 L483 405 M476 401 L483 405 M483 405 L476 408 M476 408 L476 401 M485 398 L483 405 M483 405 L476 401 M476 401 L485 398 M488 403 L483 405 M483 405 L485 398 M485 398 L488 403 M513 430 L511 433 M511 433 L509 426 M509 426 L513 430 M511 433 L517 433 M517 433 L506 435 M506 435 L511 433 M511 433 L513 430 M513 430 L517 433 M517 433 L511 433 M497 422 L497 428 M497 428 L491 421 M491 421 L497 422 M497 422 L491 421 M491 421 L496 415 M496 415 L497 422 M503 420 L497 422 M497 422 L496 415 M496 415 L503 420 M495 436 L500 435 M500 435 L506 435 M506 435 L495 436 M497 428 L500 435 M500 435 L495 436 M495 436 L497 428 M504 429 L503 420 M503 420 L509 426 M509 426 L504 429 M504 429 L497 422 M497 422 L503 420 M503 420 L504 429 M497 422 L504 429 M504 429 L497 428 M497 428 L497 422 M504 429 L511 433 M511 433 L506 435 M506 435 L504 429 M511 433 L504 429 M504 429 L509 426 M509 426 L511 433 M500 435 L504 429 M504 429 L506 435 M506 435 L500 435 M504 429 L500 435 M500 435 L497 428 M497 428 L504 429 M499 384 L492 384 M492 384 L506 383 M506 383 L499 384 M488 402 L498 409 M498 409 L489 416 M489 416 L488 402 M500 418 L498 409 M498 409 L506 410 M506 410 L500 418 M498 409 L500 418 M500 418 L489 416 M489 416 L498 409 M486 437 L500 435 M500 435 L529 432 M529 432 L486 437 M480 429 L476 416 M476 416 L479 422 M479 422 L480 429 M480 429 L481 436 M481 436 L473 411 M473 411 L480 429 M521 409 L512 419 M512 419 L506 410 M506 410 L521 409 M512 419 L521 409 M521 409 L526 417 M526 417 L512 419 M512 419 L500 418 M500 418 L506 410 M506 410 L512 419 M526 409 L521 409 M521 409 L525 402 M525 402 L526 409 M521 409 L526 409 M526 409 L526 417 M526 417 L521 409 M526 409 L525 402 M525 402 L529 432 M529 432 L526 409 M521 409 L516 403 M516 403 L525 402 M525 402 L521 409 M506 397 L516 403 M516 403 L506 410 M506 410 L506 397 M516 403 L521 409 M521 409 L506 410 M506 410 L516 403 M522 432 L528 424 M528 424 L529 432 M529 432 L522 432 M528 424 L526 409 M526 409 L529 432 M529 432 L528 424 M526 409 L528 424 M528 424 L526 417 M526 417 L526 409 M491 393 L486 386 M486 386 L492 384 M492 384 L491 393 M486 386 L491 393 M491 393 L480 391 M480 391 L486 386 M482 410 L488 402 M488 402 L489 416 M489 416 L482 410 M479 422 L482 410 M482 410 L489 416 M489 416 L479 422 M476 416 L482 410 M482 410 L479 422 M479 422 L476 416 M482 410 L476 416 M476 416 L473 411 M473 411 L482 410 M481 398 L477 398 M477 398 L480 391 M480 391 L481 398 M491 393 L481 398 M481 398 L480 391 M480 391 L491 393 M481 398 L491 393 M491 393 L488 402 M488 402 L481 398 M482 410 L481 398 M481 398 L488 402 M488 402 L482 410 M500 435 L498 429 M498 429 L508 434 M508 434 L500 435 M515 433 L522 432 M522 432 L529 432 M529 432 L515 433 M500 435 L515 433 M515 433 L529 432 M529 432 L500 435 M515 433 L500 435 M500 435 L508 434 M508 434 L515 433 M517 395 L516 403 M516 403 L506 397 M506 397 L517 395 M511 388 L517 395 M517 395 L506 397 M506 397 L511 388 M518 425 L528 424 M528 424 L522 432 M522 432 L518 425 M515 433 L518 425 M518 425 L522 432 M522 432 L515 433 M518 425 L512 419 M512 419 L526 417 M526 417 L518 425 M528 424 L518 425 M518 425 L526 417 M526 417 L528 424 M514 385 L511 388 M511 388 L506 383 M506 383 L514 385 M517 395 L514 385 M514 385 L520 389 M520 389 L517 395 M514 385 L517 395 M517 395 L511 388 M511 388 L514 385 M500 389 L511 388 M511 388 L506 397 M506 397 L500 389 M499 384 L500 389 M500 389 L492 384 M492 384 L499 384 M500 389 L491 393 M491 393 L492 384 M492 384 L500 389 M500 389 L499 384 M499 384 L506 383 M506 383 L500 389 M511 388 L500 389 M500 389 L506 383 M506 383 L511 388 M475 405 L482 410 M482 410 L473 411 M473 411 L475 405 M481 398 L475 405 M475 405 L477 398 M477 398 L481 398 M475 405 L481 398 M481 398 L482 410 M482 410 L475 405 M500 418 L491 425 M491 425 L489 416 M489 416 L500 418 M498 429 L491 425 M491 425 L500 418 M500 418 L498 429 M491 425 L479 422 M479 422 L489 416 M489 416 L491 425 M491 425 L480 429 M480 429 L479 422 M479 422 L491 425 M522 396 L520 389 M520 389 L525 402 M525 402 L522 396 M522 396 L517 395 M517 395 L520 389 M520 389 L522 396 M516 403 L522 396 M522 396 L525 402 M525 402 L516 403 M517 395 L522 396 M522 396 L516 403 M516 403 L517 395 M507 425 L515 433 M515 433 L508 434 M508 434 L507 425 M507 425 L518 425 M518 425 L515 433 M515 433 L507 425 M518 425 L507 425 M507 425 L512 419 M512 419 L518 425 M498 429 L507 425 M507 425 L508 434 M508 434 L498 429 M512 419 L507 425 M507 425 L500 418 M500 418 L512 419 M507 425 L498 429 M498 429 L500 418 M500 418 L507 425 M499 400 L500 389 M500 389 L506 397 M506 397 L499 400 M500 389 L499 400 M499 400 L491 393 M491 393 L500 389 M499 400 L506 397 M506 397 L506 410 M506 410 L499 400 M498 409 L499 400 M499 400 L506 410 M506 410 L498 409 M499 400 L498 409 M498 409 L488 402 M488 402 L499 400 M491 393 L499 400 M499 400 L488 402 M488 402 L491 393 M494 436 L491 425 M491 425 L498 429 M498 429 L494 436 M494 436 L500 435 M500 435 L486 437 M486 437 L494 436 M494 436 L498 429 M498 429 L500 435 M500 435 L494 436 M484 432 L494 436 M494 436 L486 437 M486 437 L484 432 M494 436 L484 432 M484 432 L491 425 M491 425 L494 436 M491 425 L484 432 M484 432 L480 429 M480 429 L491 425 M484 432 L486 437 M486 437 L481 436 M481 436 L484 432 M480 429 L484 432 M484 432 L481 436 M481 436 L480 429 M480 391 L487 385 M487 385 L492 384 M492 384 L510 384 M510 384 L520 389 M520 389 L526 407 M526 407 L526 416 M526 416 L528 425 M528 425 L529 431 M529 431 L481 438 M481 438 L479 425 M479 425 L478 417 M478 417 L473 415 M473 415 L472 410 M472 410 L480 391 M447 447 L442 458 M442 458 L438 450 M438 450 L447 447 M483 439 L520 432 M520 432 L501 436 M501 436 L483 439 M520 432 L483 439 M483 439 L465 441 M465 441 L520 432 M541 454 L544 444 M544 444 L549 451 M549 451 L541 454 M442 458 L447 458 M447 458 L449 463 M449 463 L442 458 M447 447 L447 458 M447 458 L442 458 M442 458 L447 447 M567 432 L571 434 M571 434 L565 441 M565 441 L567 432 M571 434 L567 432 M567 432 L575 427 M575 427 L571 434 M567 432 L565 427 M565 427 L575 427 M575 427 L567 432 M467 465 L469 460 M469 460 L477 465 M477 465 L467 465 M465 448 L456 444 M456 444 L465 441 M465 441 L465 448 M477 448 L483 439 M483 439 L488 450 M488 450 L477 448 M477 448 L469 460 M469 460 L465 448 M465 448 L477 448 M509 442 L497 446 M497 446 L501 436 M501 436 L509 442 M509 442 L520 432 M520 432 L525 439 M525 439 L509 442 M483 439 L492 438 M492 438 L488 450 M488 450 L483 439 M492 438 L497 446 M497 446 L488 450 M488 450 L492 438 M492 438 L483 439 M483 439 L501 436 M501 436 L492 438 M497 446 L492 438 M492 438 L501 436 M501 436 L497 446 M497 458 L486 464 M486 464 L488 450 M488 450 L497 458 M497 446 L497 458 M497 458 L488 450 M488 450 L497 446 M529 431 L520 432 M520 432 L538 429 M538 429 L529 431 M520 432 L529 431 M529 431 L525 439 M525 439 L520 432 M552 437 L557 447 M557 447 L549 451 M549 451 L552 437 M544 444 L552 437 M552 437 L549 451 M549 451 L544 444 M557 447 L552 437 M552 437 L565 441 M565 441 L557 447 M552 437 L567 432 M567 432 L565 441 M565 441 L552 437 M523 459 L532 456 M532 456 L541 454 M541 454 L523 459 M534 447 L544 444 M544 444 L541 454 M541 454 L534 447 M532 456 L534 447 M534 447 L541 454 M541 454 L532 456 M458 463 L467 465 M467 465 L449 463 M449 463 L458 463 M458 463 L469 460 M469 460 L467 465 M467 465 L458 463 M483 439 L474 441 M474 441 L465 441 M465 441 L483 439 M477 448 L474 441 M474 441 L483 439 M483 439 L477 448 M474 441 L465 448 M465 448 L465 441 M465 441 L474 441 M474 441 L477 448 M477 448 L465 448 M465 448 L474 441 M486 464 L480 459 M480 459 L488 450 M488 450 L486 464 M480 459 L477 448 M477 448 L488 450 M488 450 L480 459 M480 459 L486 464 M486 464 L477 465 M477 465 L480 459 M469 460 L480 459 M480 459 L477 465 M477 465 L469 460 M477 448 L480 459 M480 459 L469 460 M469 460 L477 448 M520 432 L511 434 M511 434 L501 436 M501 436 L520 432 M511 434 L509 442 M509 442 L501 436 M501 436 L511 434 M509 442 L511 434 M511 434 L520 432 M520 432 L509 442 M509 442 L510 454 M510 454 L497 446 M497 446 L509 442 M510 454 L497 458 M497 458 L497 446 M497 446 L510 454 M510 454 L523 459 M523 459 L514 461 M514 461 L510 454 M497 458 L495 463 M495 463 L486 464 M486 464 L497 458 M486 464 L495 463 M495 463 L477 465 M477 465 L486 464 M567 432 L556 427 M556 427 L565 427 M565 427 L567 432 M552 437 L556 427 M556 427 L567 432 M567 432 L552 437 M529 431 L537 434 M537 434 L525 439 M525 439 L529 431 M537 434 L534 447 M534 447 L525 439 M525 439 L537 434 M537 434 L529 431 M529 431 L538 429 M538 429 L537 434 M534 447 L537 434 M537 434 L544 444 M544 444 L534 447 M537 434 L552 437 M552 437 L544 444 M544 444 L537 434 M457 454 L447 458 M447 458 L447 447 M447 447 L457 454 M456 444 L457 454 M457 454 L447 447 M447 447 L456 444 M447 458 L457 454 M457 454 L449 463 M449 463 L447 458 M457 454 L458 463 M458 463 L449 463 M449 463 L457 454 M457 454 L456 444 M456 444 L465 448 M465 448 L457 454 M469 460 L457 454 M457 454 L465 448 M465 448 L469 460 M458 463 L457 454 M457 454 L469 460 M469 460 L458 463 M504 462 L510 454 M510 454 L514 461 M514 461 L504 462 M510 454 L504 462 M504 462 L497 458 M497 458 L510 454 M495 463 L504 462 M504 462 L514 461 M514 461 L495 463 M504 462 L495 463 M495 463 L497 458 M497 458 L504 462 M510 454 L524 451 M524 451 L523 459 M523 459 L510 454 M534 447 L524 451 M524 451 L525 439 M525 439 L534 447 M524 451 L509 442 M509 442 L525 439 M525 439 L524 451 M524 451 L510 454 M510 454 L509 442 M509 442 L524 451 M523 459 L524 451 M524 451 L532 456 M532 456 L523 459 M524 451 L534 447 M534 447 L532 456 M532 456 L524 451 M547 427 L556 427 M556 427 L552 437 M552 437 L547 427 M547 427 L537 434 M537 434 L538 429 M538 429 L547 427 M537 434 L547 427 M547 427 L552 437 M552 437 L537 434 M556 427 L547 427 M547 427 L565 427 M565 427 L556 427 M547 427 L520 432 M520 432 L465 441 M465 441 L547 427 M520 432 L547 427 M547 427 L538 429 M538 429 L520 432 M569 439 L567 427 M567 427 L574 430 M574 430 L569 439 M560 436 L569 439 M569 439 L559 446 M559 446 L560 436 M560 436 L567 427 M567 427 L569 439 M569 439 L560 436 M567 427 L560 436 M560 436 L557 427 M557 427 L567 427 M546 427 L567 427 M567 427 L557 427 M557 427 L546 427 M464 464 L473 455 M473 455 L474 465 M474 465 L464 464 M473 455 L486 464 M486 464 L474 465 M474 465 L473 455 M486 464 L473 455 M473 455 L487 450 M487 450 L486 464 M464 448 L473 455 M473 455 L464 464 M464 464 L464 448 M473 455 L464 448 M464 448 L470 441 M470 441 L473 455 M492 438 L481 440 M481 440 L470 441 M470 441 L492 438 M481 440 L492 438 M492 438 L487 450 M487 450 L481 440 M481 440 L473 455 M473 455 L470 441 M470 441 L481 440 M473 455 L481 440 M481 440 L487 450 M487 450 L473 455 M546 427 L524 431 M524 431 L470 441 M470 441 L546 427 M524 431 L492 438 M492 438 L470 441 M470 441 L524 431 M524 431 L502 436 M502 436 L492 438 M492 438 L524 431 M502 436 L524 431 M524 431 L513 434 M513 434 L502 436 M524 431 L531 440 M531 440 L513 434 M513 434 L524 431 M531 440 L518 453 M518 453 L513 434 M513 434 L531 440 M546 439 L560 436 M560 436 L559 446 M559 446 L546 439 M546 439 L539 455 M539 455 L531 440 M531 440 L546 439 M560 436 L546 439 M546 439 L557 427 M557 427 L560 436 M546 439 L546 427 M546 427 L557 427 M557 427 L546 439 M451 452 L452 463 M452 463 L442 459 M442 459 L451 452 M451 452 L464 464 M464 464 L452 463 M452 463 L451 452 M451 452 L464 448 M464 448 L464 464 M464 464 L451 452 M451 452 L442 459 M442 459 L438 450 M438 450 L451 452 M448 447 L451 452 M451 452 L438 450 M438 450 L448 447 M464 448 L459 443 M459 443 L470 441 M470 441 L464 448 M459 443 L451 452 M451 452 L448 447 M448 447 L459 443 M451 452 L459 443 M459 443 L464 448 M464 448 L451 452 M459 443 L546 427 M546 427 L470 441 M470 441 L459 443 M459 443 L448 447 M448 447 L438 450 M438 450 L459 443 M492 438 L500 454 M500 454 L487 450 M487 450 L492 438 M502 436 L500 454 M500 454 L492 438 M492 438 L502 436 M535 430 L524 431 M524 431 L546 427 M546 427 L535 430 M524 431 L535 430 M535 430 L531 440 M531 440 L524 431 M546 439 L535 430 M535 430 L546 427 M546 427 L546 439 M535 430 L546 439 M546 439 L531 440 M531 440 L535 430 M529 457 L518 453 M518 453 L531 440 M531 440 L529 457 M539 455 L529 457 M529 457 L531 440 M531 440 L539 455 M518 453 L529 457 M529 457 L518 460 M518 460 L518 453 M529 457 L539 455 M539 455 L518 460 M518 460 L529 457 M549 450 L546 439 M546 439 L559 446 M559 446 L549 450 M546 439 L549 450 M549 450 L539 455 M539 455 L546 439 M508 441 L500 454 M500 454 L502 436 M502 436 L508 441 M500 454 L508 441 M508 441 L518 453 M518 453 L500 454 M508 441 L502 436 M502 436 L513 434 M513 434 L508 441 M518 453 L508 441 M508 441 L513 434 M513 434 L518 453 M507 462 L518 453 M518 453 L518 460 M518 460 L507 462 M507 462 L500 454 M500 454 L518 453 M518 453 L507 462 M486 464 L507 462 M507 462 L474 465 M474 465 L486 464 M496 463 L486 464 M486 464 L487 450 M487 450 L496 463 M500 454 L496 463 M496 463 L487 450 M487 450 L500 454 M496 463 L507 462 M507 462 L486 464 M486 464 L496 463 M507 462 L496 463 M496 463 L500 454 M500 454 L507 462 M438 450 L463 442 M463 442 L481 439 M481 439 L529 431 M529 431 L546 427 M546 427 L575 427 M575 427 L574 430 M574 430 L568 440 M568 440 L545 453 M545 453 L515 461 M515 461 L475 465 M475 465 L444 462 M444 462 L439 454 M439 454 L438 450 M541 437 L536 453 M536 453 L526 436 M526 436 L541 437 M521 465 L536 453 M536 453 L542 475 M542 475 L521 465 M557 448 L555 438 M555 438 L569 441 M569 441 L557 448 M536 453 L557 448 M557 448 L542 475 M542 475 L536 453 M555 438 L557 448 M557 448 L541 437 M541 437 L555 438 M557 448 L536 453 M536 453 L541 437 M541 437 L557 448 M505 563 L520 541 M520 541 L527 558 M527 558 L505 563 M477 539 L486 556 M486 556 L473 552 M473 552 L477 539 M546 558 L541 578 M541 578 L527 558 M527 558 L546 558 M511 606 L483 605 M483 605 L499 582 M499 582 L511 606 M475 582 L484 572 M484 572 L499 582 M499 582 L475 582 M484 572 L505 563 M505 563 L499 582 M499 582 L484 572 M505 563 L484 572 M484 572 L486 556 M486 556 L505 563 M511 438 L496 440 M496 440 L482 440 M482 440 L511 438 M496 440 L482 449 M482 449 L482 440 M482 440 L496 440 M482 449 L496 440 M496 440 L497 456 M497 456 L482 449 M482 449 L469 446 M469 446 L482 440 M482 440 L482 449 M513 479 L521 465 M521 465 L542 475 M542 475 L513 479 M521 465 L513 479 M513 479 L497 456 M497 456 L521 465 M513 445 L521 465 M521 465 L497 456 M497 456 L513 445 M496 440 L513 445 M513 445 L497 456 M497 456 L496 440 M513 445 L496 440 M496 440 L511 438 M511 438 L513 445 M513 445 L511 438 M511 438 L526 436 M526 436 L513 445 M536 453 L513 445 M513 445 L526 436 M526 436 L536 453 M521 465 L513 445 M513 445 L536 453 M536 453 L521 465 M557 448 L562 471 M562 471 L542 475 M542 475 L557 448 M513 479 L536 494 M536 494 L513 497 M513 497 L513 479 M536 494 L513 479 M513 479 L542 475 M542 475 L536 494 M545 541 L554 518 M554 518 L561 538 M561 538 L545 541 M546 558 L545 541 M545 541 L561 538 M561 538 L546 558 M520 541 L545 541 M545 541 L527 558 M527 558 L520 541 M545 541 L546 558 M546 558 L527 558 M527 558 L545 541 M470 463 L469 446 M469 446 L482 449 M482 449 L470 463 M462 486 L470 463 M470 463 L471 487 M471 487 L462 486 M470 538 L466 524 M466 524 L472 522 M472 522 L470 538 M477 539 L470 538 M470 538 L472 522 M472 522 L477 539 M470 538 L477 539 M477 539 L473 552 M473 552 L470 538 M567 625 L582 625 M582 625 L611 625 M611 625 L567 625 M509 625 L567 625 M567 625 L611 625 M611 625 L509 625 M546 558 L556 571 M556 571 L541 578 M541 578 L546 558 M476 596 L475 582 M475 582 L499 582 M499 582 L476 596 M483 605 L476 596 M476 596 L499 582 M499 582 L483 605 M477 611 L476 596 M476 596 L483 605 M483 605 L477 611 M475 567 L484 572 M484 572 L475 582 M475 582 L475 567 M486 556 L475 567 M475 567 L473 552 M473 552 L486 556 M484 572 L475 567 M475 567 L486 556 M486 556 L484 572 M475 567 L470 538 M470 538 L473 552 M473 552 L475 567 M470 538 L475 567 M475 567 L466 524 M466 524 L470 538 M498 617 L483 605 M483 605 L511 606 M511 606 L498 617 M509 625 L498 617 M498 617 L511 606 M511 606 L509 625 M477 611 L498 617 M498 617 L480 625 M480 625 L477 611 M498 617 L477 611 M477 611 L483 605 M483 605 L498 617 M554 594 L556 571 M556 571 L573 590 M573 590 L554 594 M556 571 L554 594 M554 594 L541 578 M541 578 L556 571 M533 601 L531 615 M531 615 L511 606 M511 606 L533 601 M520 581 L511 606 M511 606 L499 582 M499 582 L520 581 M520 581 L533 601 M533 601 L511 606 M511 606 L520 581 M505 563 L520 581 M520 581 L499 582 M499 582 L505 563 M541 578 L520 581 M520 581 L527 558 M527 558 L541 578 M520 581 L505 563 M505 563 L527 558 M527 558 L520 581 M513 479 L484 472 M484 472 L497 456 M497 456 L513 479 M470 463 L484 472 M484 472 L471 487 M471 487 L470 463 M484 472 L482 449 M482 449 L497 456 M497 456 L484 472 M484 472 L470 463 M470 463 L482 449 M482 449 L484 472 M574 455 L557 448 M557 448 L569 441 M569 441 L574 455 M574 455 L562 471 M562 471 L557 448 M557 448 L574 455 M536 494 L530 511 M530 511 L513 497 M513 497 L536 494 M562 471 L554 497 M554 497 L542 475 M542 475 L562 471 M554 497 L536 494 M536 494 L542 475 M542 475 L554 497 M530 511 L554 497 M554 497 L554 518 M554 518 L530 511 M554 497 L530 511 M530 511 L536 494 M536 494 L554 497 M554 518 L571 524 M571 524 L561 538 M561 538 L554 518 M478 505 L496 510 M496 510 L472 522 M472 522 L478 505 M477 539 L495 540 M495 540 L486 556 M486 556 L477 539 M495 540 L477 539 M477 539 L472 522 M472 522 L495 540 M496 510 L495 540 M495 540 L472 522 M472 522 L496 510 M495 540 L505 563 M505 563 L486 556 M486 556 L495 540 M495 540 L520 541 M520 541 L505 563 M505 563 L495 540 M470 463 L456 454 M456 454 L469 446 M469 446 L470 463 M462 486 L453 474 M453 474 L470 463 M470 463 L462 486 M456 454 L453 474 M453 474 L444 462 M444 462 L456 454 M453 474 L456 454 M456 454 L470 463 M470 463 L453 474 M599 587 L589 603 M589 603 L573 590 M573 590 L599 587 M589 603 L599 587 M599 587 L604 601 M604 601 L589 603 M599 587 L610 614 M610 614 L604 601 M604 601 L599 587 M599 617 L610 614 M610 614 L611 625 M611 625 L599 617 M610 614 L599 617 M599 617 L604 601 M604 601 L610 614 M599 617 L589 603 M589 603 L604 601 M604 601 L599 617 M589 603 L569 609 M569 609 L573 590 M573 590 L589 603 M569 609 L554 594 M554 594 L573 590 M573 590 L569 609 M556 571 L582 575 M582 575 L573 590 M573 590 L556 571 M582 575 L589 559 M589 559 L594 573 M594 573 L582 575 M582 575 L599 587 M599 587 L573 590 M573 590 L582 575 M599 587 L582 575 M582 575 L594 573 M594 573 L599 587 M571 562 L546 558 M546 558 L561 538 M561 538 L571 562 M571 562 L556 571 M556 571 L546 558 M546 558 L571 562 M589 559 L571 562 M571 562 L585 545 M585 545 L589 559 M582 575 L571 562 M571 562 L589 559 M589 559 L582 575 M571 562 L582 575 M582 575 L556 571 M556 571 L571 562 M495 625 L509 625 M509 625 L480 625 M480 625 L495 625 M498 617 L495 625 M495 625 L480 625 M480 625 L498 617 M495 625 L498 617 M498 617 L509 625 M509 625 L495 625 M569 609 L551 610 M551 610 L554 594 M554 594 L569 609 M551 610 L567 625 M567 625 L553 625 M553 625 L551 610 M551 610 L569 609 M569 609 L567 625 M567 625 L551 610 M524 625 L509 625 M509 625 L511 606 M511 606 L524 625 M531 615 L524 625 M524 625 L511 606 M511 606 L531 615 M538 587 L520 581 M520 581 L541 578 M541 578 L538 587 M520 581 L538 587 M538 587 L533 601 M533 601 L520 581 M554 594 L538 587 M538 587 L541 578 M541 578 L554 594 M562 471 L577 469 M577 469 L580 483 M580 483 L562 471 M574 455 L577 469 M577 469 L562 471 M562 471 L574 455 M495 540 L514 514 M514 514 L520 541 M520 541 L495 540 M514 514 L495 540 M495 540 L496 510 M496 510 L514 514 M514 514 L496 510 M496 510 L513 497 M513 497 L514 514 M530 511 L514 514 M514 514 L513 497 M513 497 L530 511 M545 541 L540 525 M540 525 L554 518 M554 518 L545 541 M540 525 L530 511 M530 511 L554 518 M554 518 L540 525 M540 525 L545 541 M545 541 L520 541 M520 541 L540 525 M514 514 L540 525 M540 525 L520 541 M520 541 L514 514 M540 525 L514 514 M514 514 L530 511 M530 511 L540 525 M571 490 L562 471 M562 471 L580 483 M580 483 L571 490 M571 490 L554 497 M554 497 L562 471 M562 471 L571 490 M478 505 L496 492 M496 492 L496 510 M496 510 L478 505 M496 510 L496 492 M496 492 L513 497 M513 497 L496 510 M484 472 L496 492 M496 492 L471 487 M471 487 L484 472 M496 492 L478 505 M478 505 L471 487 M471 487 L496 492 M496 492 L513 479 M513 479 L513 497 M513 497 L496 492 M496 492 L484 472 M484 472 L513 479 M513 479 L496 492 M466 524 L466 511 M466 511 L472 522 M472 522 L466 524 M466 511 L478 505 M478 505 L472 522 M472 522 L466 511 M599 617 L581 618 M581 618 L589 603 M589 603 L599 617 M581 618 L569 609 M569 609 L589 603 M589 603 L581 618 M567 625 L581 618 M581 618 L582 625 M582 625 L567 625 M569 609 L581 618 M581 618 L567 625 M567 625 L569 609 M582 625 L596 625 M596 625 L611 625 M611 625 L582 625 M596 625 L599 617 M599 617 L611 625 M611 625 L596 625 M581 618 L596 625 M596 625 L582 625 M582 625 L581 618 M596 625 L581 618 M581 618 L599 617 M599 617 L596 625 M571 562 L577 543 M577 543 L585 545 M585 545 L571 562 M577 543 L571 562 M571 562 L561 538 M561 538 L577 543 M577 543 L582 531 M582 531 L585 545 M585 545 L577 543 M571 524 L577 543 M577 543 L561 538 M561 538 L571 524 M582 531 L577 543 M577 543 L571 524 M571 524 L582 531 M551 610 L545 597 M545 597 L554 594 M554 594 L551 610 M545 597 L538 587 M538 587 L554 594 M554 594 L545 597 M583 498 L571 490 M571 490 L580 483 M580 483 L583 498 M571 490 L576 502 M576 502 L554 497 M554 497 L571 490 M576 502 L583 498 M583 498 L585 509 M585 509 L576 502 M583 498 L576 502 M576 502 L571 490 M571 490 L583 498 M554 497 L576 502 M576 502 L554 518 M554 518 L554 497 M576 502 L571 524 M571 524 L554 518 M554 518 L576 502 M579 517 L582 531 M582 531 L571 524 M571 524 L579 517 M576 502 L579 517 M579 517 L571 524 M571 524 L576 502 M478 505 L470 497 M470 497 L471 487 M471 487 L478 505 M466 511 L470 497 M470 497 L478 505 M478 505 L466 511 M470 497 L462 486 M462 486 L471 487 M471 487 L470 497 M565 460 L557 439 M557 439 L570 446 M570 446 L565 460 M576 461 L565 460 M565 460 L570 446 M570 446 L576 461 M565 460 L576 461 M576 461 L570 479 M570 479 L565 460 M522 449 L518 469 M518 469 L506 439 M506 439 L522 449 M486 461 L518 469 M518 469 L507 487 M507 487 L486 461 M518 469 L486 461 M486 461 L506 439 M506 439 L518 469 M579 479 L583 495 M583 495 L570 479 M570 479 L579 479 M576 461 L579 479 M579 479 L570 479 M570 479 L576 461 M579 479 L576 461 M576 461 L583 495 M583 495 L579 479 M583 495 L567 502 M567 502 L570 479 M570 479 L583 495 M559 541 L566 575 M566 575 L539 547 M539 547 L559 541 M522 449 L524 437 M524 437 L540 436 M540 436 L522 449 M524 437 L522 449 M522 449 L506 439 M506 439 L524 437 M518 469 L528 491 M528 491 L507 487 M507 487 L518 469 M528 491 L514 514 M514 514 L507 487 M507 487 L528 491 M514 514 L528 491 M528 491 L546 509 M546 509 L514 514 M548 449 L518 469 M518 469 L522 449 M522 449 L548 449 M548 449 L522 449 M522 449 L540 436 M540 436 L548 449 M557 439 L548 449 M548 449 L540 436 M540 436 L557 439 M565 460 L548 449 M548 449 L557 439 M557 439 L565 460 M489 440 L486 461 M486 461 L473 443 M473 443 L489 440 M486 461 L489 440 M489 440 L506 439 M506 439 L486 461 M489 440 L524 437 M524 437 L506 439 M506 439 L489 440 M459 452 L455 475 M455 475 L444 462 M444 462 L459 452 M563 611 L552 624 M552 624 L550 607 M550 607 L563 611 M476 586 L478 604 M478 604 L479 621 M479 621 L476 586 M478 604 L476 586 M476 586 L506 593 M506 593 L478 604 M526 625 L570 625 M570 625 L587 625 M587 625 L526 625 M563 611 L570 625 M570 625 L552 624 M552 624 L563 611 M566 575 L534 566 M534 566 L539 547 M539 547 L566 575 M534 566 L542 592 M542 592 L530 586 M530 586 L534 566 M542 592 L534 566 M534 566 L566 575 M566 575 L542 592 M582 563 L588 555 M588 555 L593 571 M593 571 L582 563 M566 575 L582 563 M582 563 L593 571 M593 571 L566 575 M559 541 L582 563 M582 563 L566 575 M566 575 L559 541 M588 555 L582 563 M582 563 L584 538 M584 538 L588 555 M582 563 L559 541 M559 541 L584 538 M584 538 L582 563 M567 502 L571 524 M571 524 L546 509 M546 509 L567 502 M571 524 L559 541 M559 541 L546 509 M546 509 L571 524 M559 541 L571 524 M571 524 L584 538 M584 538 L559 541 M476 586 L483 574 M483 574 L506 593 M506 593 L476 586 M493 509 L514 514 M514 514 L505 536 M505 536 L493 509 M514 514 L493 509 M493 509 L507 487 M507 487 L514 514 M530 529 L514 514 M514 514 L546 509 M546 509 L530 529 M530 529 L559 541 M559 541 L539 547 M539 547 L530 529 M559 541 L530 529 M530 529 L546 509 M546 509 L559 541 M505 536 L530 529 M530 529 L539 547 M539 547 L505 536 M514 514 L530 529 M530 529 L505 536 M505 536 L514 514 M546 481 L528 491 M528 491 L518 469 M518 469 L546 481 M548 449 L546 481 M546 481 L518 469 M518 469 L548 449 M546 481 L548 449 M548 449 L565 460 M565 460 L546 481 M546 481 L565 460 M565 460 L570 479 M570 479 L546 481 M528 491 L546 481 M546 481 L546 509 M546 509 L528 491 M567 502 L546 481 M546 481 L570 479 M570 479 L567 502 M546 481 L567 502 M567 502 L546 509 M546 509 L546 481 M485 481 L486 461 M486 461 L507 487 M507 487 L485 481 M493 509 L485 481 M485 481 L507 487 M507 487 L493 509 M485 481 L493 509 M493 509 L468 505 M468 505 L485 481 M468 457 L455 475 M455 475 L459 452 M459 452 L468 457 M468 457 L459 452 M459 452 L473 443 M473 443 L468 457 M486 461 L468 457 M468 457 L473 443 M473 443 L486 461 M485 481 L468 457 M468 457 L486 461 M486 461 L485 481 M468 457 L485 481 M485 481 L455 475 M455 475 L468 457 M602 617 L604 625 M604 625 L587 625 M587 625 L602 617 M602 617 L605 603 M605 603 L611 619 M611 619 L602 617 M604 625 L602 617 M602 617 L611 619 M611 619 L604 625 M552 593 L563 611 M563 611 L550 607 M550 607 L552 593 M542 592 L552 593 M552 593 L550 607 M550 607 L542 592 M552 593 L542 592 M542 592 L566 575 M566 575 L552 593 M585 592 L593 571 M593 571 L599 587 M599 587 L585 592 M585 592 L566 575 M566 575 L593 571 M593 571 L585 592 M605 603 L585 592 M585 592 L599 587 M599 587 L605 603 M585 592 L552 593 M552 593 L566 575 M566 575 L585 592 M552 593 L585 592 M585 592 L563 611 M563 611 L552 593 M530 586 L535 594 M535 594 L506 593 M506 593 L530 586 M535 594 L532 611 M532 611 L506 593 M506 593 L535 594 M542 592 L535 594 M535 594 L530 586 M530 586 L542 592 M515 616 L532 611 M532 611 L526 625 M526 625 L515 616 M510 625 L515 616 M515 616 L526 625 M526 625 L510 625 M532 611 L515 616 M515 616 L506 593 M506 593 L532 611 M515 569 L505 536 M505 536 L539 547 M539 547 L515 569 M534 566 L515 569 M515 569 L539 547 M539 547 L534 566 M515 569 L490 549 M490 549 L505 536 M505 536 L515 569 M515 569 L483 574 M483 574 L490 549 M490 549 L515 569 M483 574 L515 569 M515 569 L506 593 M506 593 L483 574 M515 569 L530 586 M530 586 L506 593 M506 593 L515 569 M515 569 L534 566 M534 566 L530 586 M530 586 L515 569 M577 505 L567 502 M567 502 L583 495 M583 495 L577 505 M585 509 L577 505 M577 505 L583 495 M583 495 L585 509 M577 505 L571 524 M571 524 L567 502 M567 502 L577 505 M475 569 L483 574 M483 574 L476 586 M476 586 L475 569 M490 549 L475 569 M475 569 L473 553 M473 553 L490 549 M483 574 L475 569 M475 569 L490 549 M490 549 L483 574 M490 549 L481 532 M481 532 L505 536 M505 536 L490 549 M481 532 L493 509 M493 509 L505 536 M505 536 L481 532 M481 532 L490 549 M490 549 L473 553 M473 553 L481 532 M481 532 L463 520 M463 520 L468 505 M468 505 L481 532 M493 509 L481 532 M481 532 L468 505 M468 505 L493 509 M465 489 L485 481 M485 481 L468 505 M468 505 L465 489 M485 481 L465 489 M465 489 L455 475 M455 475 L485 481 M585 592 L582 612 M582 612 L563 611 M563 611 L585 592 M570 625 L582 612 M582 612 L587 625 M587 625 L570 625 M582 612 L570 625 M570 625 L563 611 M563 611 L582 612 M582 612 L602 617 M602 617 L587 625 M587 625 L582 612 M602 617 L582 612 M582 612 L605 603 M605 603 L602 617 M582 612 L585 592 M585 592 L605 603 M605 603 L582 612 M492 625 L487 615 M487 615 L510 625 M510 625 L492 625 M487 615 L515 616 M515 616 L510 625 M510 625 L487 615 M515 616 L487 615 M487 615 L506 593 M506 593 L515 616 M487 615 L478 604 M478 604 L506 593 M506 593 L487 615 M478 604 L487 615 M487 615 L479 621 M479 621 L478 604 M487 615 L492 625 M492 625 L479 621 M479 621 L487 615 M577 505 L580 521 M580 521 L571 524 M571 524 L577 505 M571 524 L580 521 M580 521 L584 538 M584 538 L571 524 M463 520 L470 536 M470 536 L473 553 M473 553 L463 520 M470 536 L481 532 M481 532 L473 553 M473 553 L470 536 M481 532 L470 536 M470 536 L463 520 M463 520 L481 532 M444 462 L471 498 M471 498 L463 520 M463 520 L468 527 M468 527 L474 556 M474 556 L475 587 M475 587 L479 625 M479 625 L529 625 M529 625 L534 595 M534 595 L538 585 M538 585 L550 607 M550 607 L553 625 M553 625 L614 625 M614 625 L601 593 M601 593 L590 564 M590 564 L582 533 M582 533 L576 500 M576 500 L586 510 M586 510 L576 461 M576 461 L568 440 M568 440 L535 436 M535 436 L475 441 M475 441 L444 462 M482 440 L475 443 M475 443 L478 437 M478 437 L482 440 M523 470 L517 467 M517 467 L524 459 M524 459 L523 470 M531 471 L523 470 M523 470 L524 459 M524 459 L531 471 M533 457 L531 471 M531 471 L524 459 M524 459 L533 457 M541 471 L531 471 M531 471 L533 457 M533 457 L541 471 M531 471 L541 471 M541 471 L534 477 M534 477 L531 471 M547 450 L551 441 M551 441 L552 446 M552 446 L547 450 M512 431 L499 433 M499 433 L526 429 M526 429 L512 431 M471 456 L469 461 M469 461 L468 456 M468 456 L471 456 M471 449 L471 456 M471 456 L468 456 M468 456 L471 449 M517 467 L515 456 M515 456 L524 459 M524 459 L517 467 M505 463 L499 468 M499 468 L502 455 M502 455 L505 463 M515 456 L505 463 M505 463 L502 455 M502 455 L515 456 M505 463 L515 456 M515 456 L517 467 M517 467 L505 463 M517 474 L517 467 M517 467 L523 470 M523 470 L517 474 M534 477 L541 474 M541 474 L546 471 M546 471 L534 477 M541 474 L541 471 M541 471 L546 471 M546 471 L541 474 M541 471 L541 474 M541 474 L534 477 M534 477 L541 471 M544 464 L551 467 M551 467 L546 471 M546 471 L544 464 M541 471 L544 464 M544 464 L546 471 M546 471 L541 471 M544 464 L541 471 M541 471 L533 457 M533 457 L544 464 M531 471 L523 478 M523 478 L523 470 M523 470 L531 471 M523 478 L517 474 M517 474 L523 470 M523 470 L523 478 M517 474 L523 478 M523 478 L521 482 M521 482 L517 474 M551 467 L552 453 M552 453 L552 446 M552 446 L551 467 M552 453 L547 450 M547 450 L552 446 M552 446 L552 453 M535 449 L547 450 M547 450 L533 457 M533 457 L535 449 M506 433 L512 431 M512 431 L508 437 M508 437 L506 433 M512 431 L506 433 M506 433 L499 433 M499 433 L512 431 M519 430 L512 431 M512 431 L526 429 M526 429 L519 430 M492 435 L485 436 M485 436 L499 433 M499 433 L492 435 M526 429 L485 436 M485 436 L478 437 M478 437 L526 429 M499 433 L485 436 M485 436 L526 429 M526 429 L499 433 M485 436 L482 440 M482 440 L478 437 M478 437 L485 436 M498 437 L492 435 M492 435 L499 433 M499 433 L498 437 M498 437 L506 433 M506 433 L508 437 M508 437 L498 437 M506 433 L498 437 M498 437 L499 433 M499 433 L506 433 M493 476 L488 481 M488 481 L482 478 M482 478 L493 476 M488 481 L493 476 M493 476 L494 484 M494 484 L488 481 M493 476 L490 464 M490 464 L499 468 M499 468 L493 476 M501 481 L493 476 M493 476 L499 468 M499 468 L501 481 M493 476 L501 481 M501 481 L494 484 M494 484 L493 476 M524 447 L515 456 M515 456 L512 444 M512 444 L524 447 M515 456 L524 447 M524 447 L524 459 M524 459 L515 456 M535 449 L524 447 M524 447 L528 440 M528 440 L535 449 M524 447 L533 457 M533 457 L524 459 M524 459 L524 447 M524 447 L535 449 M535 449 L533 457 M533 457 L524 447 M514 483 L521 482 M521 482 L507 484 M507 484 L514 483 M514 483 L517 474 M517 474 L521 482 M521 482 L514 483 M547 450 L549 457 M549 457 L533 457 M533 457 L547 450 M549 457 L544 464 M544 464 L533 457 M533 457 L549 457 M552 453 L549 457 M549 457 L547 450 M547 450 L552 453 M528 480 L531 471 M531 471 L534 477 M534 477 L528 480 M528 480 L523 478 M523 478 L531 471 M531 471 L528 480 M523 478 L528 480 M528 480 L521 482 M521 482 L523 478 M528 480 L534 477 M534 477 L546 471 M546 471 L528 480 M532 431 L526 434 M526 434 L526 429 M526 429 L532 431 M526 434 L532 431 M532 431 L528 440 M528 440 L526 434 M526 434 L519 430 M519 430 L526 429 M526 429 L526 434 M532 431 L539 434 M539 434 L528 440 M528 440 L532 431 M544 438 L539 434 M539 434 L551 441 M551 441 L544 438 M535 449 L541 441 M541 441 L547 450 M547 450 L535 449 M541 441 L544 438 M544 438 L551 441 M551 441 L541 441 M547 450 L541 441 M541 441 L551 441 M551 441 L547 450 M541 441 L539 434 M539 434 L544 438 M544 438 L541 441 M541 441 L535 449 M535 449 L528 440 M528 440 L541 441 M539 434 L541 441 M541 441 L528 440 M528 440 L539 434 M519 430 L520 437 M520 437 L512 431 M512 431 L519 430 M520 437 L512 444 M512 444 L508 437 M508 437 L520 437 M512 431 L520 437 M520 437 L508 437 M508 437 L512 431 M526 434 L520 437 M520 437 L519 430 M519 430 L526 434 M520 437 L524 447 M524 447 L512 444 M512 444 L520 437 M524 447 L520 437 M520 437 L528 440 M528 440 L524 447 M520 437 L526 434 M526 434 L528 440 M528 440 L520 437 M479 447 L471 456 M471 456 L471 449 M471 449 L479 447 M479 447 L475 443 M475 443 L482 440 M482 440 L479 447 M479 447 L471 449 M471 449 L475 443 M475 443 L479 447 M498 437 L491 439 M491 439 L492 435 M492 435 L498 437 M495 448 L491 439 M491 439 L498 437 M498 437 L495 448 M485 436 L491 439 M491 439 L482 440 M482 440 L485 436 M491 439 L485 436 M485 436 L492 435 M492 435 L491 439 M506 446 L498 437 M498 437 L508 437 M508 437 L506 446 M506 446 L495 448 M495 448 L498 437 M498 437 L506 446 M512 444 L506 446 M506 446 L508 437 M508 437 L512 444 M495 448 L506 446 M506 446 L502 455 M502 455 L495 448 M506 446 L515 456 M515 456 L502 455 M502 455 L506 446 M515 456 L506 446 M506 446 L512 444 M512 444 L515 456 M483 471 L493 476 M493 476 L482 478 M482 478 L483 471 M483 471 L490 464 M490 464 L493 476 M493 476 L483 471 M499 468 L494 456 M494 456 L502 455 M502 455 L499 468 M490 464 L494 456 M494 456 L499 468 M499 468 L490 464 M494 456 L495 448 M495 448 L502 455 M502 455 L494 456 M508 475 L501 481 M501 481 L499 468 M499 468 L508 475 M505 463 L508 475 M508 475 L499 468 M499 468 L505 463 M501 481 L508 475 M508 475 L507 484 M507 484 L501 481 M508 475 L505 463 M505 463 L517 467 M517 467 L508 475 M517 474 L508 475 M508 475 L517 467 M517 467 L517 474 M508 475 L514 483 M514 483 L507 484 M507 484 L508 475 M514 483 L508 475 M508 475 L517 474 M517 474 L514 483 M494 484 L501 484 M501 484 L507 484 M507 484 L494 484 M501 484 L501 481 M501 481 L507 484 M507 484 L501 484 M501 481 L501 484 M501 484 L494 484 M494 484 L501 481 M551 459 L552 453 M552 453 L551 467 M551 467 L551 459 M551 459 L549 457 M549 457 L552 453 M552 453 L551 459 M544 464 L551 459 M551 459 L551 467 M551 467 L544 464 M549 457 L551 459 M551 459 L544 464 M544 464 L549 457 M476 474 L483 471 M483 471 L482 478 M482 478 L476 474 M471 456 L479 462 M479 462 L469 461 M469 461 L471 456 M483 471 L479 462 M479 462 L490 464 M490 464 L483 471 M476 474 L473 467 M473 467 L483 471 M483 471 L476 474 M473 467 L479 462 M479 462 L483 471 M483 471 L473 467 M473 467 L476 474 M476 474 L469 461 M469 461 L473 467 M479 462 L473 467 M473 467 L469 461 M469 461 L479 462 M479 447 L485 457 M485 457 L471 456 M471 456 L479 447 M485 457 L479 462 M479 462 L471 456 M471 456 L485 457 M485 457 L494 456 M494 456 L490 464 M490 464 L485 457 M479 462 L485 457 M485 457 L490 464 M490 464 L479 462 M487 448 L485 457 M485 457 L479 447 M479 447 L487 448 M487 448 L479 447 M479 447 L482 440 M482 440 L487 448 M494 456 L487 448 M487 448 L495 448 M495 448 L494 456 M485 457 L487 448 M487 448 L494 456 M494 456 L485 457 M491 439 L487 448 M487 448 L482 440 M482 440 L491 439 M487 448 L491 439 M491 439 L495 448 M495 448 L487 448 M486 471 L483 478 M483 478 L476 473 M476 473 L486 471 M497 468 L486 471 M486 471 L495 459 M495 459 L497 468 M478 468 L486 471 M486 471 L476 473 M476 473 L478 468 M508 453 L495 449 M495 449 L511 442 M511 442 L508 453 M495 449 L508 453 M508 453 L495 459 M495 459 L495 449 M487 440 L494 435 M494 435 L495 449 M495 449 L487 440 M544 473 L548 465 M548 465 L551 469 M551 469 L544 473 M541 459 L548 465 M548 465 L544 473 M544 473 L541 459 M489 481 L483 478 M483 478 L486 471 M486 471 L489 481 M472 466 L478 468 M478 468 L476 473 M476 473 L472 466 M486 471 L485 459 M485 459 L495 459 M495 459 L486 471 M478 468 L485 459 M485 459 L486 471 M486 471 L478 468 M485 459 L495 449 M495 449 L495 459 M495 459 L485 459 M523 475 L512 475 M512 475 L517 465 M517 465 L523 475 M512 475 L523 475 M523 475 L521 482 M521 482 L512 475 M508 453 L523 457 M523 457 L517 465 M517 465 L508 453 M523 457 L508 453 M508 453 L511 442 M511 442 L523 457 M506 467 L508 453 M508 453 L517 465 M517 465 L506 467 M512 475 L506 467 M506 467 L517 465 M517 465 L512 475 M506 467 L497 468 M497 468 L495 459 M495 459 L506 467 M508 453 L506 467 M506 467 L495 459 M495 459 L508 453 M495 449 L501 437 M501 437 L511 442 M511 442 L495 449 M494 435 L501 437 M501 437 L495 449 M495 449 L494 435 M502 433 L501 437 M501 437 L494 435 M494 435 L502 433 M501 437 L502 433 M502 433 L511 442 M511 442 L501 437 M486 436 L487 440 M487 440 L478 437 M478 437 L486 436 M487 440 L486 436 M486 436 L494 435 M494 435 L487 440 M502 433 L486 436 M486 436 L478 437 M478 437 L502 433 M486 436 L502 433 M502 433 L494 435 M494 435 L486 436 M529 434 L518 431 M518 431 L526 429 M526 429 L529 434 M541 436 L543 448 M543 448 L535 442 M535 442 L541 436 M548 465 L552 461 M552 461 L551 469 M551 469 L548 465 M541 459 L552 461 M552 461 L548 465 M548 465 L541 459 M484 450 L487 440 M487 440 L495 449 M495 449 L484 450 M485 459 L484 450 M484 450 L495 449 M495 449 L485 459 M472 466 L476 459 M476 459 L478 468 M478 468 L472 466 M476 459 L485 459 M485 459 L478 468 M478 468 L476 459 M476 459 L472 466 M472 466 L468 458 M468 458 L476 459 M476 459 L484 450 M484 450 L485 459 M485 459 L476 459 M523 475 L529 480 M529 480 L521 482 M521 482 L523 475 M529 480 L536 476 M536 476 L544 473 M544 473 L529 480 M489 481 L500 477 M500 477 L496 485 M496 485 L489 481 M506 467 L500 477 M500 477 L497 468 M497 468 L506 467 M500 477 L506 467 M506 467 L512 475 M512 475 L500 477 M497 468 L500 477 M500 477 L486 471 M486 471 L497 468 M500 477 L489 481 M489 481 L486 471 M486 471 L500 477 M513 483 L521 482 M521 482 L496 485 M496 485 L513 483 M513 483 L512 475 M512 475 L521 482 M521 482 L513 483 M543 448 L531 450 M531 450 L535 442 M535 442 L543 448 M541 459 L531 450 M531 450 L543 448 M543 448 L541 459 M510 431 L502 433 M502 433 L526 429 M526 429 L510 431 M518 431 L510 431 M510 431 L526 429 M526 429 L518 431 M502 433 L510 431 M510 431 L511 442 M511 442 L502 433 M510 431 L518 431 M518 431 L511 442 M511 442 L510 431 M534 432 L529 434 M529 434 L526 429 M526 429 L534 432 M529 434 L534 432 M534 432 L535 442 M535 442 L529 434 M534 432 L541 436 M541 436 L535 442 M535 442 L534 432 M552 453 L541 459 M541 459 L543 448 M543 448 L552 453 M552 453 L552 461 M552 461 L541 459 M541 459 L552 453 M552 453 L543 448 M543 448 L552 444 M552 444 L552 453 M552 461 L552 453 M552 453 L552 444 M552 444 L552 461 M487 440 L474 444 M474 444 L478 437 M478 437 L487 440 M484 450 L474 444 M474 444 L487 440 M487 440 L484 450 M531 469 L523 475 M523 475 L517 465 M517 465 L531 469 M523 457 L531 469 M531 469 L517 465 M517 465 L523 457 M531 469 L529 480 M529 480 L523 475 M523 475 L531 469 M531 469 L536 476 M536 476 L529 480 M529 480 L531 469 M531 469 L531 450 M531 450 L541 459 M541 459 L531 469 M531 450 L531 469 M531 469 L523 457 M523 457 L531 450 M531 469 L541 459 M541 459 L544 473 M544 473 L531 469 M536 476 L531 469 M531 469 L544 473 M544 473 L536 476 M505 484 L500 477 M500 477 L512 475 M512 475 L505 484 M513 483 L505 484 M505 484 L512 475 M512 475 L513 483 M500 477 L505 484 M505 484 L496 485 M496 485 L500 477 M505 484 L513 483 M513 483 L496 485 M496 485 L505 484 M523 440 L523 457 M523 457 L511 442 M511 442 L523 440 M523 440 L531 450 M531 450 L523 457 M523 457 L523 440 M518 431 L523 440 M523 440 L511 442 M511 442 L518 431 M523 440 L518 431 M518 431 L529 434 M529 434 L523 440 M523 440 L529 434 M529 434 L535 442 M535 442 L523 440 M531 450 L523 440 M523 440 L535 442 M535 442 L531 450 M534 432 L549 439 M549 439 L541 436 M541 436 L534 432 M543 448 L549 439 M549 439 L552 444 M552 444 L543 448 M541 436 L549 439 M549 439 L543 448 M543 448 L541 436 M476 459 L470 451 M470 451 L484 450 M484 450 L476 459 M470 451 L474 444 M474 444 L484 450 M484 450 L470 451 M470 451 L476 459 M476 459 L468 458 M468 458 L470 451 M474 444 L470 451 M470 451 L478 437 M478 437 L474 444 M478 437 L527 429 M527 429 L553 441 M553 441 L551 469 M551 469 L527 481 M527 481 L497 485 M497 485 L477 475 M477 475 L467 457 M467 457 L478 437 M453 468 L446 481 M446 481 L442 464 M442 464 L453 468 M446 481 L453 468 M453 468 L461 476 M461 476 L446 481 M402 544 L398 526 M398 526 L407 522 M407 522 L402 544 M389 581 L382 593 M382 593 L379 582 M379 582 L389 581 M382 593 L389 581 M389 581 L391 592 M391 592 L382 593 M429 484 L446 481 M446 481 L438 493 M438 493 L429 484 M398 526 L403 515 M403 515 L407 522 M407 522 L398 526 M458 488 L446 481 M446 481 L461 476 M461 476 L458 488 M422 530 L402 544 M402 544 L407 522 M407 522 L422 530 M402 544 L422 530 M422 530 L422 545 M422 545 L402 544 M432 512 L425 498 M425 498 L438 493 M438 493 L432 512 M425 498 L429 484 M429 484 L438 493 M438 493 L425 498 M381 570 L384 559 M384 559 L386 569 M386 569 L381 570 M381 570 L389 581 M389 581 L379 582 M379 582 L381 570 M389 581 L381 570 M381 570 L386 569 M386 569 L389 581 M394 537 L402 544 M402 544 L390 548 M390 548 L394 537 M402 544 L394 537 M394 537 L398 526 M398 526 L402 544 M384 559 L394 537 M394 537 L390 548 M390 548 L384 559 M394 537 L384 559 M384 559 L398 526 M398 526 L394 537 M446 481 L435 473 M435 473 L442 464 M442 464 L446 481 M429 484 L435 473 M435 473 L446 481 M446 481 L429 484 M458 488 L466 486 M466 486 L470 497 M470 497 L458 488 M466 486 L458 488 M458 488 L461 476 M461 476 L466 486 M446 481 L449 500 M449 500 L438 493 M438 493 L446 481 M458 488 L449 500 M449 500 L446 481 M446 481 L458 488 M449 500 L432 512 M432 512 L438 493 M438 493 L449 500 M449 500 L452 509 M452 509 L432 512 M432 512 L449 500 M422 530 L432 540 M432 540 L422 545 M422 545 L422 530 M429 484 L422 492 M422 492 L411 495 M411 495 L429 484 M422 492 L425 498 M425 498 L411 495 M411 495 L422 492 M425 498 L422 492 M422 492 L429 484 M429 484 L425 498 M416 509 L425 498 M425 498 L432 512 M432 512 L416 509 M403 515 L416 509 M416 509 L407 522 M407 522 L403 515 M425 498 L416 509 M416 509 L411 495 M411 495 L425 498 M416 509 L422 530 M422 530 L407 522 M407 522 L416 509 M422 530 L416 509 M416 509 L432 512 M432 512 L422 530 M442 522 L450 531 M450 531 L444 536 M444 536 L442 522 M442 522 L422 530 M422 530 L432 512 M432 512 L442 522 M432 540 L442 522 M442 522 L444 536 M444 536 L432 540 M442 522 L432 540 M432 540 L422 530 M422 530 L442 522 M413 554 L402 544 M402 544 L422 545 M422 545 L413 554 M402 544 L393 555 M393 555 L390 548 M390 548 L402 544 M393 555 L384 559 M384 559 L390 548 M390 548 L393 555 M413 554 L393 555 M393 555 L402 544 M402 544 L413 554 M449 500 L461 502 M461 502 L452 509 M452 509 L449 500 M461 502 L458 488 M458 488 L470 497 M470 497 L461 502 M461 502 L449 500 M449 500 L458 488 M458 488 L461 502 M416 509 L407 505 M407 505 L411 495 M411 495 L416 509 M407 505 L416 509 M416 509 L403 515 M403 515 L407 505 M411 495 L407 505 M407 505 L398 526 M398 526 L411 495 M407 505 L403 515 M403 515 L398 526 M398 526 L407 505 M452 509 L448 519 M448 519 L432 512 M432 512 L452 509 M448 519 L442 522 M442 522 L432 512 M432 512 L448 519 M442 522 L448 519 M448 519 L450 531 M450 531 L442 522 M404 566 L413 554 M413 554 L410 564 M410 564 L404 566 M404 566 L393 555 M393 555 L413 554 M413 554 L404 566 M392 571 L389 581 M389 581 L386 569 M386 569 L392 571 M384 559 L392 571 M392 571 L386 569 M386 569 L384 559 M393 555 L392 571 M392 571 L384 559 M384 559 L393 555 M392 571 L404 566 M404 566 L397 573 M397 573 L392 571 M404 566 L392 571 M392 571 L393 555 M393 555 L404 566 M408 576 L404 566 M404 566 L410 564 M410 564 L408 576 M408 576 L404 583 M404 583 L397 573 M397 573 L408 576 M404 566 L408 576 M408 576 L397 573 M397 573 L404 566 M384 560 L401 519 M401 519 L390 547 M390 547 L384 560 M401 519 L395 534 M395 534 L390 547 M390 547 L401 519 M454 496 L465 481 M465 481 L470 495 M470 495 L454 496 M430 540 L428 534 M428 534 L445 536 M445 536 L430 540 M428 534 L430 540 M430 540 L418 549 M418 549 L428 534 M409 539 L428 534 M428 534 L418 549 M418 549 L409 539 M395 534 L409 539 M409 539 L390 547 M390 547 L395 534 M409 539 L395 534 M395 534 L401 519 M401 519 L409 539 M410 560 L409 539 M409 539 L418 549 M418 549 L410 560 M409 539 L401 519 M401 519 L411 515 M411 515 L409 539 M428 534 L409 539 M409 539 L411 515 M411 515 L428 534 M384 560 L396 568 M396 568 L379 575 M379 575 L384 560 M444 473 L454 469 M454 469 L465 481 M465 481 L444 473 M454 496 L444 473 M444 473 L465 481 M465 481 L454 496 M454 469 L444 473 M444 473 L442 464 M442 464 L454 469 M460 502 L454 496 M454 496 L470 495 M470 495 L460 502 M436 518 L448 526 M448 526 L445 536 M445 536 L436 518 M428 534 L436 518 M436 518 L445 536 M445 536 L428 534 M431 500 L436 518 M436 518 L411 515 M411 515 L431 500 M436 518 L428 534 M428 534 L411 515 M411 515 L436 518 M407 506 L431 500 M431 500 L411 515 M411 515 L407 506 M407 506 L413 494 M413 494 L431 500 M431 500 L407 506 M401 519 L407 506 M407 506 L411 515 M411 515 L401 519 M409 539 L394 557 M394 557 L390 547 M390 547 L409 539 M394 557 L409 539 M409 539 L410 560 M410 560 L394 557 M396 568 L394 557 M394 557 L410 560 M410 560 L396 568 M394 557 L384 560 M384 560 L390 547 M390 547 L394 557 M394 557 L396 568 M396 568 L384 560 M384 560 L394 557 M396 568 L388 579 M388 579 L379 575 M379 575 L396 568 M388 579 L381 589 M381 589 L379 575 M379 575 L388 579 M381 589 L388 579 M388 579 L390 593 M390 593 L381 589 M409 575 L396 568 M396 568 L410 560 M410 560 L409 575 M426 490 L454 496 M454 496 L431 500 M431 500 L426 490 M413 494 L426 490 M426 490 L431 500 M431 500 L413 494 M460 502 L449 512 M449 512 L454 496 M454 496 L460 502 M454 496 L449 512 M449 512 L431 500 M431 500 L454 496 M449 512 L436 518 M436 518 L431 500 M431 500 L449 512 M436 518 L449 512 M449 512 L448 526 M448 526 L436 518 M409 575 L401 581 M401 581 L396 568 M396 568 L409 575 M444 473 L433 476 M433 476 L442 464 M442 464 L444 473 M433 476 L444 473 M444 473 L454 496 M454 496 L433 476 M426 490 L433 476 M433 476 L454 496 M454 496 L426 490 M442 464 L433 476 M433 476 L426 490 M426 490 L408 496 M408 496 L409 500 M409 500 L400 520 M400 520 L393 540 M393 540 L382 564 M382 564 L378 578 M378 578 L382 593 M382 593 L390 596 M390 596 L391 589 M391 589 L388 578 M388 578 L396 567 M396 567 L398 576 M398 576 L404 584 M404 584 L410 573 M410 573 L409 560 M409 560 L417 549 M417 549 L431 540 M431 540 L451 534 M451 534 L447 524 M447 524 L449 511 M449 511 L464 500 M464 500 L471 498 M471 498 L465 481 M465 481 L450 465 M450 465 L442 464 M616 464 L638 488 M638 488 L623 472 M623 472 L616 464 M653 504 L616 464 M616 464 L660 512 M660 512 L653 504 M616 464 L653 504 M653 504 L638 488 M638 488 L616 464 M635 525 L650 516 M650 516 L660 512 M660 512 L635 525 M650 516 L653 504 M653 504 L660 512 M660 512 L650 516 M653 504 L650 516 M650 516 L645 510 M645 510 L653 504 M653 504 L645 496 M645 496 L638 488 M638 488 L653 504 M645 496 L653 504 M653 504 L645 510 M645 510 L645 496 M645 496 L629 503 M629 503 L638 488 M638 488 L645 496 M629 503 L645 496 M645 496 L645 510 M645 510 L629 503 M590 465 L580 477 M580 477 L576 461 M576 461 L590 465 M585 454 L590 465 M590 465 L576 461 M576 461 L585 454 M642 520 L650 516 M650 516 L635 525 M635 525 L642 520 M650 516 L642 520 M642 520 L645 510 M645 510 L650 516 M638 488 L630 480 M630 480 L623 472 M623 472 L638 488 M569 451 L570 463 M570 463 L568 440 M568 440 L569 451 M570 463 L569 451 M569 451 L576 461 M576 461 L570 463 M580 477 L571 473 M571 473 L576 461 M576 461 L580 477 M571 473 L570 463 M570 463 L576 461 M576 461 L571 473 M629 516 L629 503 M629 503 L645 510 M645 510 L629 516 M642 520 L629 516 M629 516 L645 510 M645 510 L642 520 M629 516 L642 520 M642 520 L635 525 M635 525 L629 516 M629 503 L629 516 M629 516 L621 511 M621 511 L629 503 M619 494 L629 503 M629 503 L621 511 M621 511 L619 494 M629 503 L619 494 M619 494 L638 488 M638 488 L629 503 M605 460 L602 476 M602 476 L590 465 M590 465 L605 460 M579 492 L590 501 M590 501 L579 503 M579 503 L579 492 M577 446 L585 454 M585 454 L576 461 M576 461 L577 446 M569 451 L577 446 M577 446 L576 461 M576 461 L569 451 M577 446 L569 451 M569 451 L568 440 M568 440 L577 446 M579 492 L573 484 M573 484 L580 477 M580 477 L579 492 M573 484 L571 473 M571 473 L580 477 M580 477 L573 484 M571 473 L573 484 M573 484 L570 463 M570 463 L571 473 M595 458 L590 465 M590 465 L585 454 M585 454 L595 458 M595 458 L605 460 M605 460 L590 465 M590 465 L595 458 M577 446 L595 458 M595 458 L585 454 M585 454 L577 446 M624 481 L630 480 M630 480 L638 488 M638 488 L624 481 M619 494 L624 481 M624 481 L638 488 M638 488 L619 494 M630 480 L624 481 M624 481 L623 472 M623 472 L630 480 M624 481 L619 494 M619 494 L608 488 M608 488 L624 481 M619 494 L607 502 M607 502 L608 488 M608 488 L619 494 M607 502 L590 501 M590 501 L608 488 M608 488 L607 502 M607 502 L619 494 M619 494 L621 511 M621 511 L607 502 M610 511 L607 502 M607 502 L621 511 M621 511 L610 511 M590 501 L587 510 M587 510 L579 503 M579 503 L590 501 M591 485 L590 501 M590 501 L579 492 M579 492 L591 485 M591 485 L579 492 M579 492 L580 477 M580 477 L591 485 M591 485 L602 476 M602 476 L608 488 M608 488 L591 485 M590 501 L591 485 M591 485 L608 488 M608 488 L590 501 M590 465 L591 485 M591 485 L580 477 M580 477 L590 465 M602 476 L591 485 M591 485 L590 465 M590 465 L602 476 M575 494 L579 492 M579 492 L579 503 M579 503 L575 494 M575 494 L573 484 M573 484 L579 492 M579 492 L575 494 M624 481 L613 473 M613 473 L623 472 M623 472 L624 481 M613 473 L624 481 M624 481 L608 488 M608 488 L613 473 M602 476 L613 473 M613 473 L608 488 M608 488 L602 476 M613 473 L616 464 M616 464 L623 472 M623 472 L613 473 M613 473 L605 460 M605 460 L616 464 M616 464 L613 473 M613 473 L602 476 M602 476 L605 460 M605 460 L613 473 M607 502 L599 511 M599 511 L590 501 M590 501 L607 502 M599 511 L587 510 M587 510 L590 501 M590 501 L599 511 M599 511 L607 502 M607 502 L610 511 M610 511 L599 511 M648 509 L652 503 M652 503 L660 512 M660 512 L648 509 M647 516 L648 509 M648 509 L660 512 M660 512 L647 516 M643 493 L652 503 M652 503 L648 509 M648 509 L643 493 M590 456 L602 459 M602 459 L592 467 M592 467 L590 456 M569 454 L570 467 M570 467 L568 439 M568 439 L569 454 M577 454 L590 456 M590 456 L592 467 M592 467 L577 454 M570 467 L577 454 M577 454 L592 467 M592 467 L570 467 M569 454 L577 454 M577 454 L570 467 M570 467 L569 454 M629 502 L643 493 M643 493 L648 509 M648 509 L629 502 M643 493 L629 502 M629 502 L634 484 M634 484 L643 493 M596 490 L593 510 M593 510 L581 506 M581 506 L596 490 M593 510 L596 490 M596 490 L606 511 M606 511 L593 510 M584 482 L570 467 M570 467 L592 467 M592 467 L584 482 M596 490 L584 482 M584 482 L592 467 M592 467 L596 490 M606 468 L596 490 M596 490 L592 467 M592 467 L606 468 M606 468 L602 459 M602 459 L615 463 M615 463 L606 468 M602 459 L606 468 M606 468 L592 467 M592 467 L602 459 M579 448 L569 454 M569 454 L568 439 M568 439 L579 448 M579 448 L577 454 M577 454 L569 454 M569 454 L579 448 M577 454 L579 448 M579 448 L590 456 M590 456 L577 454 M647 516 L630 517 M630 517 L648 509 M648 509 L647 516 M630 517 L629 502 M629 502 L648 509 M648 509 L630 517 M630 517 L647 516 M647 516 L638 526 M638 526 L630 517 M630 517 L620 511 M620 511 L629 502 M629 502 L630 517 M596 490 L611 484 M611 484 L606 511 M606 511 L596 490 M611 484 L620 511 M620 511 L606 511 M606 511 L611 484 M620 511 L611 484 M611 484 L629 502 M629 502 L620 511 M629 502 L611 484 M611 484 L634 484 M634 484 L629 502 M606 468 L611 484 M611 484 L596 490 M596 490 L606 468 M575 494 L596 490 M596 490 L581 506 M581 506 L575 494 M575 494 L584 482 M584 482 L596 490 M596 490 L575 494 M624 474 L606 468 M606 468 L615 463 M615 463 L624 474 M624 474 L611 484 M611 484 L606 468 M606 468 L624 474 M611 484 L624 474 M624 474 L634 484 M634 484 L611 484 M643 493 L624 474 M624 474 L615 463 M615 463 L643 493 M624 474 L643 493 M643 493 L634 484 M634 484 L624 474 M584 482 L573 481 M573 481 L570 467 M570 467 L584 482 M573 481 L575 494 M575 494 L570 467 M570 467 L573 481 M575 494 L573 481 M573 481 L584 482 M584 482 L575 494 M568 440 L578 447 M578 447 L590 457 M590 457 L613 461 M613 461 L627 478 M627 478 L642 492 M642 492 L661 512 M661 512 L643 518 M643 518 L636 527 M636 527 L627 511 M627 511 L586 510 M586 510 L576 500 M576 500 L571 471 M571 471 L568 440 M678 529 L679 523 M679 523 L680 519 M680 519 L678 529 M653 522 L650 526 M650 526 L648 520 M648 520 L653 522 M656 525 L653 522 M653 522 L656 521 M656 521 L656 525 M653 522 L656 525 M656 525 L650 526 M650 526 L653 522 M650 526 L645 524 M645 524 L648 520 M648 520 L650 526 M646 530 L645 524 M645 524 L650 526 M650 526 L646 530 M658 532 L656 538 M656 538 L654 533 M654 533 L658 532 M669 530 L665 523 M665 523 L673 525 M673 525 L669 530 M678 526 L679 523 M679 523 L678 529 M678 529 L678 526 M665 523 L670 521 M670 521 L673 525 M673 525 L665 523 M668 518 L670 521 M670 521 L665 523 M665 523 L668 518 M670 521 L672 519 M672 519 L673 525 M673 525 L670 521 M672 519 L670 521 M670 521 L668 518 M668 518 L672 519 M659 516 L656 514 M656 514 L660 512 M660 512 L659 516 M653 515 L659 516 M659 516 L656 521 M656 521 L653 515 M656 514 L659 516 M659 516 L653 515 M653 515 L656 514 M661 521 L664 517 M664 517 L665 523 M665 523 L661 521 M661 521 L665 523 M665 523 L659 528 M659 528 L661 521 M659 516 L661 521 M661 521 L656 521 M656 521 L659 516 M661 521 L659 516 M659 516 L664 517 M664 517 L661 521 M656 525 L661 521 M661 521 L659 528 M659 528 L656 525 M661 521 L656 525 M656 525 L656 521 M656 521 L661 521 M663 514 L672 519 M672 519 L668 518 M668 518 L663 514 M663 514 L659 516 M659 516 L660 512 M660 512 L663 514 M659 516 L663 514 M663 514 L664 517 M664 517 L659 516 M672 519 L663 514 M663 514 L676 519 M676 519 L672 519 M676 519 L663 514 M663 514 L680 519 M680 519 L676 519 M666 517 L668 518 M668 518 L665 523 M665 523 L666 517 M664 517 L666 517 M666 517 L665 523 M665 523 L664 517 M666 517 L663 514 M663 514 L668 518 M668 518 L666 517 M663 514 L666 517 M666 517 L664 517 M664 517 L663 514 M643 534 L640 533 M640 533 L642 532 M642 532 L643 534 M646 530 L643 534 M643 534 L642 532 M642 532 L646 530 M640 533 L638 530 M638 530 L642 532 M642 532 L640 533 M652 518 L653 515 M653 515 L656 521 M656 521 L652 518 M653 522 L652 518 M652 518 L656 521 M656 521 L653 522 M652 518 L653 522 M653 522 L648 520 M648 520 L652 518 M650 535 L654 533 M654 533 L650 537 M650 537 L650 535 M653 530 L646 530 M646 530 L650 526 M650 526 L653 530 M656 525 L653 530 M653 530 L650 526 M650 526 L656 525 M650 535 L653 530 M653 530 L654 533 M654 533 L650 535 M653 530 L650 535 M650 535 L646 530 M646 530 L653 530 M653 530 L656 525 M656 525 L659 528 M659 528 L653 530 M658 532 L653 530 M653 530 L659 528 M659 528 L658 532 M653 530 L658 532 M658 532 L654 533 M654 533 L653 530 M645 524 L643 520 M643 520 L648 520 M648 520 L645 524 M643 520 L647 517 M647 517 L648 520 M648 520 L643 520 M647 517 L643 520 M643 520 L642 518 M642 518 L647 517 M641 525 L645 524 M645 524 L646 530 M646 530 L641 525 M654 533 L654 539 M654 539 L650 537 M650 537 L654 533 M656 538 L654 539 M654 539 L654 533 M654 533 L656 538 M643 534 L654 539 M654 539 L640 533 M640 533 L643 534 M660 535 L656 538 M656 538 L658 532 M658 532 L660 535 M660 535 L664 537 M664 537 L661 539 M661 539 L660 535 M674 542 L674 537 M674 537 L676 540 M676 540 L674 542 M674 537 L676 536 M676 536 L676 540 M676 540 L674 537 M676 522 L678 526 M678 526 L673 525 M673 525 L676 522 M678 526 L676 522 M676 522 L679 523 M679 523 L678 526 M672 519 L676 522 M676 522 L673 525 M673 525 L672 519 M676 522 L672 519 M672 519 L676 519 M676 519 L676 522 M676 522 L676 519 M676 519 L680 519 M680 519 L676 522 M679 523 L676 522 M676 522 L680 519 M680 519 L679 523 M652 518 L649 515 M649 515 L653 515 M653 515 L652 518 M649 515 L656 514 M656 514 L653 515 M653 515 L649 515 M647 517 L649 515 M649 515 L648 520 M648 520 L647 517 M649 515 L652 518 M652 518 L648 520 M648 520 L649 515 M649 515 L647 517 M647 517 L642 518 M642 518 L649 515 M647 536 L643 534 M643 534 L646 530 M646 530 L647 536 M650 535 L647 536 M647 536 L646 530 M646 530 L650 535 M647 536 L650 535 M650 535 L650 537 M650 537 L647 536 M654 539 L647 536 M647 536 L650 537 M650 537 L654 539 M647 536 L654 539 M654 539 L643 534 M643 534 L647 536 M639 528 L646 530 M646 530 L642 532 M642 532 L639 528 M639 528 L641 525 M641 525 L646 530 M646 530 L639 528 M638 530 L639 528 M639 528 L642 532 M642 532 L638 530 M639 528 L638 530 M638 530 L636 527 M636 527 L639 528 M641 521 L643 520 M643 520 L645 524 M645 524 L641 521 M641 525 L641 521 M641 521 L645 524 M645 524 L641 525 M643 520 L641 521 M641 521 L642 518 M642 518 L643 520 M670 539 L664 537 M664 537 L668 534 M668 534 L670 539 M674 537 L670 539 M670 539 L668 534 M668 534 L674 537 M670 539 L674 537 M674 537 L674 542 M674 542 L670 539 M670 539 L674 542 M674 542 L671 544 M671 544 L670 539 M668 544 L670 539 M670 539 L671 544 M671 544 L668 544 M657 539 L654 539 M654 539 L656 538 M656 538 L657 539 M657 539 L660 535 M660 535 L661 539 M661 539 L657 539 M660 535 L657 539 M657 539 L656 538 M656 538 L660 535 M668 544 L657 539 M657 539 L661 539 M661 539 L668 544 M654 539 L657 539 M657 539 L668 544 M668 544 L654 539 M664 537 L664 529 M664 529 L668 534 M668 534 L664 537 M660 535 L664 529 M664 529 L664 537 M664 537 L660 535 M664 529 L669 530 M669 530 L668 534 M668 534 L664 529 M664 529 L660 535 M660 535 L658 532 M658 532 L664 529 M664 529 L658 532 M658 532 L659 528 M659 528 L664 529 M665 523 L664 529 M664 529 L659 528 M659 528 L665 523 M669 530 L664 529 M664 529 L665 523 M665 523 L669 530 M674 537 L673 533 M673 533 L676 536 M676 536 L674 537 M669 530 L673 533 M673 533 L668 534 M668 534 L669 530 M673 533 L674 537 M674 537 L668 534 M668 534 L673 533 M638 524 L641 521 M641 521 L641 525 M641 525 L638 524 M638 524 L639 528 M639 528 L636 527 M636 527 L638 524 M639 528 L638 524 M638 524 L641 525 M641 525 L639 528 M641 521 L638 524 M638 524 L642 518 M642 518 L641 521 M666 541 L670 539 M670 539 L668 544 M668 544 L666 541 M666 541 L668 544 M668 544 L661 539 M661 539 L666 541 M673 533 L678 532 M678 532 L676 536 M676 536 L673 533 M676 536 L678 532 M678 532 L676 540 M676 540 L676 536 M678 532 L678 529 M678 529 L680 519 M680 519 L678 532 M670 539 L665 539 M665 539 L664 537 M664 537 L670 539 M666 541 L665 539 M665 539 L670 539 M670 539 L666 541 M664 537 L665 539 M665 539 L661 539 M661 539 L664 537 M665 539 L666 541 M666 541 L661 539 M661 539 L665 539 M678 532 L676 530 M676 530 L678 529 M678 529 L678 532 M676 530 L678 532 M678 532 L673 533 M673 533 L676 530 M678 526 L676 530 M676 530 L673 525 M673 525 L678 526 M676 530 L678 526 M678 526 L678 529 M678 529 L676 530 M676 530 L669 530 M669 530 L673 525 M673 525 L676 530 M676 530 L673 533 M673 533 L669 530 M669 530 L676 530 M671 540 L673 544 M673 544 L669 544 M669 544 L671 540 M673 544 L671 540 M671 540 L676 542 M676 542 L673 544 M664 526 L661 530 M661 530 L659 522 M659 522 L664 526 M667 521 L664 526 M664 526 L659 522 M659 522 L667 521 M664 526 L667 521 M667 521 L669 528 M669 528 L664 526 M661 530 L655 526 M655 526 L659 522 M659 522 L661 530 M667 532 L664 526 M664 526 L669 528 M669 528 L667 532 M664 526 L667 532 M667 532 L661 530 M661 530 L664 526 M660 518 L667 521 M667 521 L659 522 M659 522 L660 518 M660 518 L666 517 M666 517 L667 521 M667 521 L660 518 M640 533 L638 530 M638 530 L645 529 M645 529 L640 533 M645 534 L640 533 M640 533 L645 529 M645 529 L645 534 M648 534 L645 534 M645 534 L645 529 M645 529 L648 534 M653 532 L648 534 M648 534 L645 529 M645 529 L653 532 M649 523 L653 532 M653 532 L645 529 M645 529 L649 523 M653 532 L649 523 M649 523 L655 526 M655 526 L653 532 M673 533 L667 532 M667 532 L669 528 M669 528 L673 533 M667 532 L662 536 M662 536 L661 530 M661 530 L667 532 M675 523 L678 519 M678 519 L680 521 M680 521 L675 523 M679 526 L675 523 M675 523 L680 521 M680 521 L679 526 M675 523 L674 519 M674 519 L678 519 M678 519 L675 523 M667 521 L675 523 M675 523 L669 528 M669 528 L667 521 M660 518 L656 514 M656 514 L659 512 M659 512 L660 518 M663 514 L660 518 M660 518 L659 512 M659 512 L663 514 M663 514 L666 517 M666 517 L660 518 M660 518 L663 514 M674 519 L663 514 M663 514 L678 519 M678 519 L674 519 M641 520 L639 525 M639 525 L636 527 M636 527 L641 520 M639 525 L638 530 M638 530 L636 527 M636 527 L639 525 M655 526 L653 519 M653 519 L659 522 M659 522 L655 526 M649 523 L653 519 M653 519 L655 526 M655 526 L649 523 M653 519 L660 518 M660 518 L659 522 M659 522 L653 519 M653 519 L656 514 M656 514 L660 518 M660 518 L653 519 M653 519 L649 523 M649 523 L648 517 M648 517 L653 519 M641 524 L649 523 M649 523 L645 529 M645 529 L641 524 M641 524 L639 525 M639 525 L641 520 M641 520 L641 524 M638 530 L641 524 M641 524 L645 529 M645 529 L638 530 M639 525 L641 524 M641 524 L638 530 M638 530 L639 525 M648 534 L649 536 M649 536 L645 534 M645 534 L648 534 M640 533 L649 536 M649 536 L653 538 M653 538 L640 533 M645 534 L649 536 M649 536 L640 533 M640 533 L645 534 M649 536 L653 532 M653 532 L653 538 M653 538 L649 536 M653 532 L649 536 M649 536 L648 534 M648 534 L653 532 M657 534 L655 526 M655 526 L661 530 M661 530 L657 534 M657 534 L653 532 M653 532 L655 526 M655 526 L657 534 M662 536 L657 534 M657 534 L661 530 M661 530 L662 536 M657 534 L662 536 M662 536 L660 539 M660 539 L657 534 M653 532 L657 534 M657 534 L653 538 M653 538 L653 532 M671 540 L676 538 M676 538 L676 542 M676 542 L671 540 M673 533 L676 538 M676 538 L671 540 M671 540 L673 533 M676 538 L679 526 M679 526 L676 542 M676 542 L676 538 M667 537 L662 536 M662 536 L667 532 M667 532 L667 537 M667 537 L673 533 M673 533 L671 540 M671 540 L667 537 M673 533 L667 537 M667 537 L667 532 M667 532 L673 533 M676 528 L679 526 M679 526 L678 529 M678 529 L676 528 M676 528 L675 523 M675 523 L679 526 M679 526 L676 528 M675 523 L676 528 M676 528 L669 528 M669 528 L675 523 M676 528 L673 533 M673 533 L669 528 M669 528 L676 528 M673 533 L676 528 M676 528 L678 529 M678 529 L673 533 M670 518 L675 523 M675 523 L667 521 M667 521 L670 518 M675 523 L670 518 M670 518 L674 519 M674 519 L675 523 M666 517 L670 518 M670 518 L667 521 M667 521 L666 517 M663 514 L670 518 M670 518 L666 517 M666 517 L663 514 M670 518 L663 514 M663 514 L674 519 M674 519 L670 518 M656 514 L652 515 M652 515 L659 512 M659 512 L656 514 M644 518 L652 515 M652 515 L648 517 M648 517 L644 518 M652 515 L653 519 M653 519 L648 517 M648 517 L652 515 M653 519 L652 515 M652 515 L656 514 M656 514 L653 519 M641 524 L646 520 M646 520 L649 523 M649 523 L641 524 M649 523 L646 520 M646 520 L648 517 M648 517 L649 523 M646 520 L644 518 M644 518 L648 517 M648 517 L646 520 M646 520 L641 524 M641 524 L641 520 M641 520 L646 520 M644 518 L646 520 M646 520 L641 520 M641 520 L644 518 M657 534 L657 539 M657 539 L653 538 M653 538 L657 534 M657 539 L657 534 M657 534 L660 539 M660 539 L657 539 M677 534 L673 533 M673 533 L678 529 M678 529 L677 534 M677 534 L676 538 M676 538 L673 533 M673 533 L677 534 M679 526 L677 534 M677 534 L678 529 M678 529 L679 526 M676 538 L677 534 M677 534 L679 526 M679 526 L676 538 M665 542 L671 540 M671 540 L669 544 M669 544 L665 542 M665 542 L657 539 M657 539 L660 539 M660 539 L665 542 M667 537 L665 539 M665 539 L662 536 M662 536 L667 537 M662 536 L665 539 M665 539 L660 539 M660 539 L662 536 M665 539 L665 542 M665 542 L660 539 M660 539 L665 539 M665 539 L667 537 M667 537 L671 540 M671 540 L665 539 M665 542 L665 539 M665 539 L671 540 M671 540 L665 542 M636 527 L643 518 M643 518 L661 512 M661 512 L667 518 M667 518 L680 519 M680 519 L676 537 M676 537 L676 542 M676 542 L670 544 M670 544 L666 544 M666 544 L666 539 M666 539 L656 539 M656 539 L640 533 M640 533 L636 527 M708 516 L697 516 M697 516 L705 513 M705 513 L708 516 M685 522 L680 519 M680 519 L684 515 M684 515 L685 522 M694 514 L689 514 M689 514 L705 513 M705 513 L694 514 M717 513 L711 513 M711 513 L705 513 M705 513 L717 513 M711 513 L708 516 M708 516 L705 513 M705 513 L711 513 M689 517 L697 516 M697 516 L697 524 M697 524 L689 517 M685 522 L689 517 M689 517 L697 524 M697 524 L685 522 M689 517 L694 514 M694 514 L697 516 M697 516 L689 517 M694 514 L689 517 M689 517 L689 514 M689 514 L694 514 M689 514 L689 517 M689 517 L684 515 M684 515 L689 514 M689 517 L685 522 M685 522 L684 515 M684 515 L689 517 M719 520 L717 513 M717 513 L722 514 M722 514 L719 520 M697 516 L700 514 M700 514 L705 513 M705 513 L697 516 M700 514 L694 514 M694 514 L705 513 M705 513 L700 514 M694 514 L700 514 M700 514 L697 516 M697 516 L694 514 M696 537 L695 541 M695 541 L689 540 M689 540 L696 537 M692 533 L696 537 M696 537 L689 540 M689 540 L692 533 M685 522 L679 525 M679 525 L680 519 M680 519 L685 522 M679 525 L678 529 M678 529 L680 519 M680 519 L679 525 M726 517 L719 520 M719 520 L722 514 M722 514 L726 517 M733 525 L730 521 M730 521 L736 528 M736 528 L733 525 M727 523 L726 530 M726 530 L721 525 M721 525 L727 523 M727 523 L726 517 M726 517 L730 521 M730 521 L727 523 M733 525 L727 523 M727 523 L730 521 M730 521 L733 525 M719 520 L727 523 M727 523 L721 525 M721 525 L719 520 M726 517 L727 523 M727 523 L719 520 M719 520 L726 517 M697 516 L704 525 M704 525 L697 524 M697 524 L697 516 M708 516 L704 525 M704 525 L697 516 M697 516 L708 516 M713 522 L719 520 M719 520 L721 525 M721 525 L713 522 M713 530 L713 522 M713 522 L721 525 M721 525 L713 530 M711 513 L713 522 M713 522 L708 516 M708 516 L711 513 M713 522 L704 525 M704 525 L708 516 M708 516 L713 522 M704 525 L713 522 M713 522 L713 530 M713 530 L704 525 M713 522 L711 513 M711 513 L717 513 M717 513 L713 522 M719 520 L713 522 M713 522 L717 513 M717 513 L719 520 M722 539 L726 530 M726 530 L728 539 M728 539 L722 539 M701 541 L695 541 M695 541 L696 537 M696 537 L701 541 M685 537 L692 533 M692 533 L689 540 M689 540 L685 537 M733 538 L731 536 M731 536 L736 533 M736 533 L733 538 M731 536 L733 538 M733 538 L728 539 M728 539 L731 536 M726 530 L731 536 M731 536 L728 539 M728 539 L726 530 M727 523 L731 528 M731 528 L726 530 M726 530 L727 523 M731 528 L727 523 M727 523 L733 525 M733 525 L731 528 M731 528 L731 536 M731 536 L726 530 M726 530 L731 528 M731 536 L731 528 M731 528 L736 533 M736 533 L731 536 M736 533 L731 528 M731 528 L736 528 M736 528 L736 533 M731 528 L733 525 M733 525 L736 528 M736 528 L731 528 M704 525 L700 532 M700 532 L697 524 M697 524 L704 525 M700 532 L692 533 M692 533 L697 524 M697 524 L700 532 M692 533 L700 532 M700 532 L696 537 M696 537 L692 533 M700 532 L701 541 M701 541 L696 537 M696 537 L700 532 M679 537 L685 537 M685 537 L689 540 M689 540 L679 537 M695 541 L679 537 M679 537 L689 540 M689 540 L695 541 M685 537 L687 528 M687 528 L692 533 M692 533 L685 537 M687 528 L679 525 M679 525 L685 522 M685 522 L687 528 M679 525 L687 528 M687 528 L678 529 M678 529 L679 525 M687 528 L685 522 M685 522 L697 524 M697 524 L687 528 M692 533 L687 528 M687 528 L697 524 M697 524 L692 533 M707 531 L704 525 M704 525 L713 530 M713 530 L707 531 M707 531 L700 532 M700 532 L704 525 M704 525 L707 531 M715 537 L707 531 M707 531 L713 530 M713 530 L715 537 M715 537 L717 540 M717 540 L711 540 M711 540 L715 537 M711 540 L717 540 M717 540 L706 541 M706 541 L711 540 M717 540 L722 539 M722 539 L728 539 M728 539 L717 540 M722 539 L719 533 M719 533 L726 530 M726 530 L722 539 M726 530 L719 533 M719 533 L721 525 M721 525 L726 530 M717 540 L719 533 M719 533 L722 539 M722 539 L717 540 M719 533 L717 540 M717 540 L715 537 M715 537 L719 533 M719 533 L713 530 M713 530 L721 525 M721 525 L719 533 M719 533 L715 537 M715 537 L713 530 M713 530 L719 533 M687 528 L681 533 M681 533 L678 529 M678 529 L687 528 M681 533 L687 528 M687 528 L685 537 M685 537 L681 533 M679 537 L681 533 M681 533 L685 537 M685 537 L679 537 M678 529 L681 533 M681 533 L677 535 M677 535 L678 529 M681 533 L679 537 M679 537 L677 535 M677 535 L681 533 M707 539 L715 537 M715 537 L711 540 M711 540 L707 539 M707 539 L707 531 M707 531 L715 537 M715 537 L707 539 M707 539 L711 540 M711 540 L706 541 M706 541 L707 539 M707 531 L707 539 M707 539 L700 532 M700 532 L707 531 M701 541 L707 539 M707 539 L706 541 M706 541 L701 541 M700 532 L707 539 M707 539 L701 541 M701 541 L700 532 M679 525 L681 530 M681 530 L677 532 M677 532 L679 525 M710 513 L704 514 M704 514 L697 513 M697 513 L710 513 M693 523 L705 532 M705 532 L698 534 M698 534 L693 523 M707 525 L705 532 M705 532 L693 523 M693 523 L707 525 M701 541 L694 541 M694 541 L698 534 M698 534 L701 541 M701 541 L705 532 M705 532 L707 541 M707 541 L701 541 M705 532 L701 541 M701 541 L698 534 M698 534 L705 532 M732 523 L727 518 M727 518 L736 527 M736 527 L732 523 M729 534 L736 532 M736 532 L733 537 M733 537 L729 534 M695 517 L691 513 M691 513 L697 513 M697 513 L695 517 M687 520 L679 525 M679 525 L680 519 M680 519 L687 520 M685 515 L687 520 M687 520 L680 519 M680 519 L685 515 M681 530 L687 520 M687 520 L693 523 M693 523 L681 530 M687 520 L681 530 M681 530 L679 525 M679 525 L687 520 M687 520 L695 517 M695 517 L693 523 M693 523 L687 520 M691 513 L687 520 M687 520 L685 515 M685 515 L691 513 M695 517 L687 520 M687 520 L691 513 M691 513 L695 517 M694 541 L691 537 M691 537 L698 534 M698 534 L694 541 M691 537 L693 523 M693 523 L698 534 M698 534 L691 537 M691 537 L681 530 M681 530 L693 523 M693 523 L691 537 M704 519 L704 514 M704 514 L710 513 M710 513 L704 519 M704 519 L707 525 M707 525 L693 523 M693 523 L704 519 M695 517 L704 519 M704 519 L693 523 M693 523 L695 517 M704 514 L704 519 M704 519 L697 513 M697 513 L704 514 M704 519 L695 517 M695 517 L697 513 M697 513 L704 519 M713 529 L705 532 M705 532 L707 525 M707 525 L713 529 M726 539 L729 534 M729 534 L733 537 M733 537 L726 539 M729 534 L732 529 M732 529 L736 532 M736 532 L729 534 M732 529 L732 523 M732 523 L736 527 M736 527 L732 529 M736 532 L732 529 M732 529 L736 527 M736 527 L736 532 M689 538 L694 541 M694 541 L677 537 M677 537 L689 538 M689 538 L691 537 M691 537 L694 541 M694 541 L689 538 M705 532 L713 536 M713 536 L707 541 M707 541 L705 532 M713 529 L713 536 M713 536 L705 532 M705 532 L713 529 M712 518 L713 529 M713 529 L707 525 M707 525 L712 518 M717 514 L712 518 M712 518 L710 513 M710 513 L717 514 M704 519 L712 518 M712 518 L707 525 M707 525 L704 519 M712 518 L704 519 M704 519 L710 513 M710 513 L712 518 M732 529 L724 528 M724 528 L732 523 M732 523 L732 529 M724 528 L732 529 M732 529 L729 534 M729 534 L724 528 M724 528 L727 518 M727 518 L732 523 M732 523 L724 528 M691 537 L683 537 M683 537 L681 530 M681 530 L691 537 M689 538 L683 537 M683 537 L691 537 M691 537 L689 538 M683 537 L689 538 M689 538 L677 537 M677 537 L683 537 M683 537 L677 537 M677 537 L677 532 M677 532 L683 537 M681 530 L683 537 M683 537 L677 532 M677 532 L681 530 M713 536 L714 540 M714 540 L707 541 M707 541 L713 536 M714 540 L713 536 M713 536 L720 539 M720 539 L714 540 M714 540 L726 539 M726 539 L707 541 M707 541 L714 540 M726 539 L714 540 M714 540 L720 539 M720 539 L726 539 M722 535 L724 528 M724 528 L729 534 M729 534 L722 535 M722 535 L726 539 M726 539 L720 539 M720 539 L722 535 M726 539 L722 535 M722 535 L729 534 M729 534 L726 539 M724 528 L722 535 M722 535 L713 529 M713 529 L724 528 M713 536 L722 535 M722 535 L720 539 M720 539 L713 536 M722 535 L713 536 M713 536 L713 529 M713 529 L722 535 M727 518 L720 519 M720 519 L723 515 M723 515 L727 518 M724 528 L720 519 M720 519 L727 518 M727 518 L724 528 M720 519 L717 514 M717 514 L723 515 M723 515 L720 519 M720 519 L712 518 M712 518 L717 514 M717 514 L720 519 M712 518 L720 519 M720 519 L713 529 M713 529 L712 518 M720 519 L724 528 M724 528 L713 529 M713 529 L720 519 M680 519 L687 514 M687 514 L696 513 M696 513 L722 513 M722 513 L730 521 M730 521 L732 525 M732 525 L737 526 M737 526 L736 535 M736 535 L732 538 M732 538 L704 542 M704 542 L690 541 M690 541 L687 537 M687 537 L676 537 M676 537 L680 519 M717 562 L722 559 M722 559 L723 573 M723 573 L717 562 M722 559 L739 569 M739 569 L723 573 M723 573 L722 559 M710 550 L722 559 M722 559 L717 562 M717 562 L710 550 M710 550 L717 562 M717 562 L723 573 M723 573 L710 550 M739 569 L731 582 M731 582 L723 573 M723 573 L739 569 M710 550 L719 539 M719 539 L722 559 M722 559 L710 550 M732 537 L719 539 M719 539 L706 541 M706 541 L732 537 M719 539 L710 550 M710 550 L706 541 M706 541 L719 539 M760 562 L751 554 M751 554 L772 568 M772 568 L760 562 M762 588 L752 598 M752 598 L741 590 M741 590 L762 588 M752 575 L762 588 M762 588 L741 590 M741 590 L752 575 M731 582 L752 575 M752 575 L741 590 M741 590 L731 582 M752 575 L731 582 M731 582 L739 569 M739 569 L752 575 M751 554 L752 575 M752 575 L739 569 M739 569 L751 554 M752 575 L751 554 M751 554 L760 562 M760 562 L752 575 M738 552 L739 569 M739 569 L722 559 M722 559 L738 552 M738 552 L751 554 M751 554 L739 569 M739 569 L738 552 M738 552 L719 539 M719 539 L732 537 M732 537 L738 552 M719 539 L738 552 M738 552 L722 559 M722 559 L719 539 M768 602 L780 589 M780 589 L774 612 M774 612 L768 602 M780 589 L768 602 M768 602 L762 588 M762 588 L780 589 M752 575 L769 574 M769 574 L762 588 M762 588 L752 575 M769 574 L780 589 M780 589 L762 588 M762 588 L769 574 M769 574 L760 562 M760 562 L772 568 M772 568 L769 574 M769 574 L752 575 M752 575 L760 562 M760 562 L769 574 M774 612 L794 605 M794 605 L786 617 M786 617 L774 612 M780 589 L794 605 M794 605 L774 612 M774 612 L780 589 M794 605 L780 589 M780 589 L800 593 M800 593 L794 605 M794 605 L800 593 M800 593 L803 606 M803 606 L794 605 M799 617 L794 605 M794 605 L803 606 M803 606 L799 617 M794 605 L799 617 M799 617 L786 617 M786 617 L794 605 M785 574 L769 574 M769 574 L772 568 M772 568 L785 574 M769 574 L785 574 M785 574 L780 589 M780 589 L769 574 M741 545 L738 552 M738 552 L732 537 M732 537 L741 545 M738 552 L741 545 M741 545 L751 554 M751 554 L738 552 M763 605 L752 598 M752 598 L762 588 M762 588 L763 605 M768 602 L763 605 M763 605 L762 588 M762 588 L768 602 M752 598 L763 605 M763 605 L774 612 M774 612 L752 598 M763 605 L768 602 M768 602 L774 612 M774 612 L763 605 M780 589 L793 582 M793 582 L800 593 M800 593 L780 589 M785 574 L793 582 M793 582 L780 589 M780 589 L785 574 M726 555 L716 540 M716 540 L732 538 M732 538 L726 555 M726 555 L749 564 M749 564 L722 572 M722 572 L726 555 M759 603 L773 612 M773 612 L746 594 M746 594 L759 603 M761 595 L759 603 M759 603 L746 594 M746 594 L761 595 M759 603 L761 595 M761 595 L773 612 M773 612 L759 603 M742 582 L761 595 M761 595 L746 594 M746 594 L742 582 M734 584 L742 582 M742 582 L746 594 M746 594 L734 584 M749 564 L742 582 M742 582 L722 572 M722 572 L749 564 M742 582 L734 584 M734 584 L722 572 M722 572 L742 582 M743 548 L726 555 M726 555 L732 538 M732 538 L743 548 M726 555 L743 548 M743 548 L749 564 M749 564 L726 555 M743 548 L756 558 M756 558 L749 564 M749 564 L743 548 M756 558 L743 548 M743 548 L783 574 M783 574 L756 558 M716 540 L715 558 M715 558 L706 545 M706 545 L716 540 M726 555 L715 558 M715 558 L716 540 M716 540 L726 555 M715 558 L722 572 M722 572 L706 545 M706 545 L715 558 M715 558 L726 555 M726 555 L722 572 M722 572 L715 558 M767 575 L742 582 M742 582 L749 564 M749 564 L767 575 M742 582 L767 575 M767 575 L761 595 M761 595 L742 582 M795 610 L787 617 M787 617 L773 612 M773 612 L795 610 M787 617 L795 610 M795 610 L802 614 M802 614 L787 617 M761 595 L787 592 M787 592 L773 612 M773 612 L761 595 M787 592 L795 610 M795 610 L773 612 M773 612 L787 592 M794 584 L787 592 M787 592 L783 574 M783 574 L794 584 M787 592 L767 575 M767 575 L783 574 M783 574 L787 592 M767 575 L787 592 M787 592 L761 595 M761 595 L767 575 M756 558 L768 567 M768 567 L749 564 M749 564 L756 558 M768 567 L767 575 M767 575 L749 564 M749 564 L768 567 M768 567 L756 558 M756 558 L783 574 M783 574 L768 567 M767 575 L768 567 M768 567 L783 574 M783 574 L767 575 M795 610 L802 598 M802 598 L802 614 M802 614 L795 610 M802 598 L787 592 M787 592 L794 584 M794 584 L802 598 M787 592 L802 598 M802 598 L795 610 M795 610 L787 592 M732 538 L734 537 M734 537 L746 550 M746 550 L764 565 M764 565 L790 577 M790 577 L798 590 M798 590 L804 602 M804 602 L803 612 M803 612 L798 618 M798 618 L787 617 M787 617 L773 612 M773 612 L753 599 M753 599 L740 589 M740 589 L726 578 M726 578 L717 562 M717 562 L705 543 M705 543 L704 542 M704 542 L732 538 M450 499 L475 491 M450 500 L475 492 M475 491 L515 485 M475 492 L515 486 M515 485 L556 477 M515 486 L556 478 M463 520 L495 515 M463 521 L495 516 M495 515 L535 509 M495 516 L535 510 M535 509 L575 499 M535 510 L575 500 M474 549 L515 543 M474 550 L515 544 M515 543 L555 537 M515 544 L555 538 M555 537 L580 528 M555 538 L580 529 M475 573 L515 567 M475 574 L515 568 M515 567 L555 559 M515 568 L555 560 M555 559 L587 549 M555 560 L587 550" stroke="#ff0000" stroke-width="1" fill="none" shape-rendering="crispEdges"/></svg>
  <div class="a" style="left:0;top:0;width:1px;height:625px;background:#0a0a0a"></div>
  <div class="a" style="left:901px;top:0;width:1px;height:625px;background:#0e0e0e"></div>
  <div class="bot a"></div>
</div>

<!-- mouse cursor -->
<svg class="a" style="left:933px;top:122px" width="14" height="18" viewBox="0 0 14 18">
  <path d="M1 1 L1 14 L4 11 L7 17 L9 16 L6 10 L10 10 Z" fill="#f4f4f4" stroke="#222" stroke-width="0.8"/>
</svg>

</body></html>
